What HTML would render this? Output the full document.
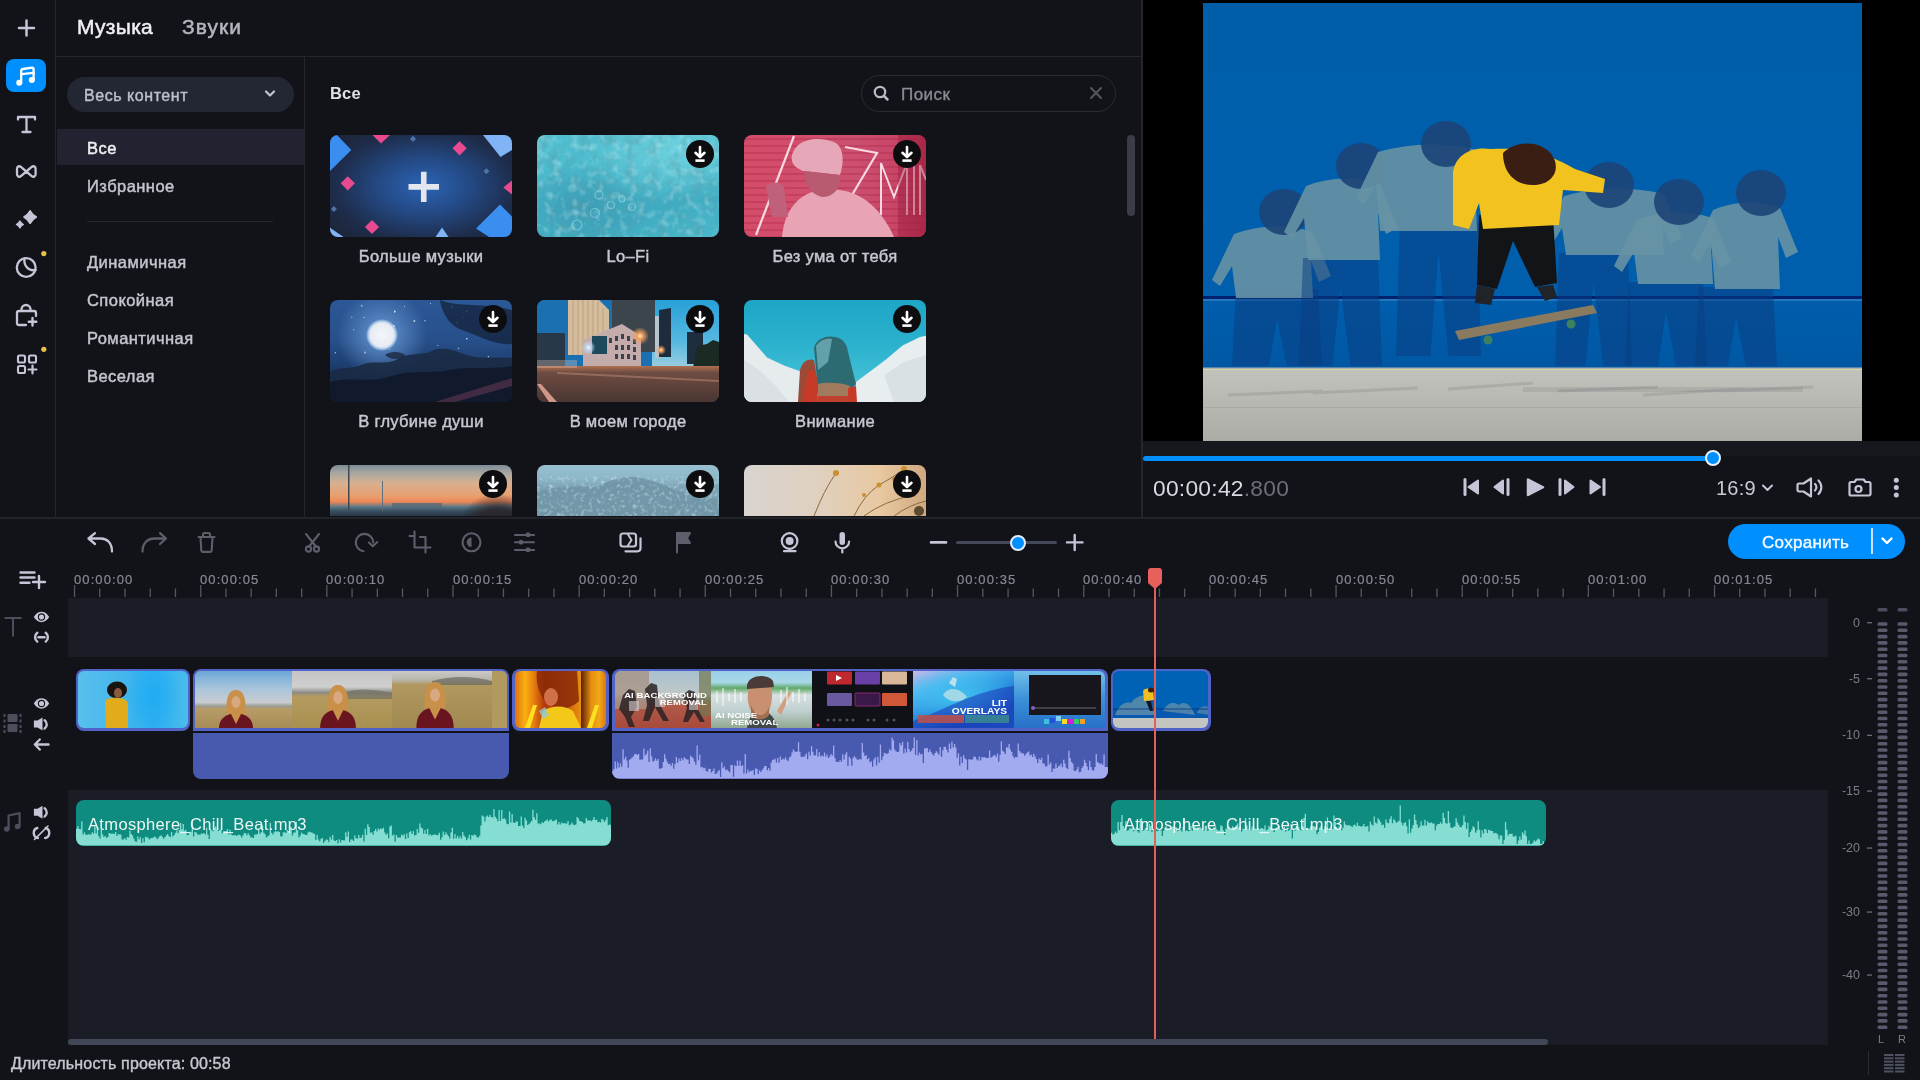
<!DOCTYPE html>
<html><head><meta charset="utf-8">
<style>
*{margin:0;padding:0;box-sizing:border-box}
html,body{width:1920px;height:1080px;overflow:hidden;background:#121318;font-family:"Liberation Sans",sans-serif;color:#d6d7e0;-webkit-font-smoothing:antialiased}
.t,.lbl{will-change:transform}
.a{position:absolute}
.ic{position:absolute;overflow:visible}
.t{position:absolute;white-space:nowrap;line-height:1}
.card{position:absolute;width:182px;height:102px;border-radius:8px;overflow:hidden}
.lbl{position:absolute;width:182px;text-align:center;font-size:16.5px;color:#c6c7d1;letter-spacing:0.3px;-webkit-text-stroke:0.45px #c6c7d1;line-height:1}
.dl{position:absolute;width:28px;height:28px;border-radius:14px;background:#0d0d10}
</style></head><body>

<div class="a" style="left:55px;top:0;width:1px;height:518px;background:#25262b"></div>
<svg class="ic" style="left:0;top:0" width="56" height="400" viewBox="0 0 56 400">
 <g stroke="#c4c5d6" fill="none" stroke-linecap="round" stroke-linejoin="round">
  <path d="M26.5 20.5v15M19 28h15" stroke-width="2.5"/>
  <path d="M18 119.5v-2.5h17v2.5M26.5 117v15M22.5 132h8" stroke-width="2.3"/>
  <path d="M26.3 171.5L21.2 167.2C19.2 165.5 17 166.2 17 168.7v5.6c0 2.5 2.2 3.2 4.2 1.5ZL31.4 167.2C33.4 165.5 35.6 166.2 35.6 168.7v5.6c0 2.5 -2.2 3.2 -4.2 1.5Z" stroke-width="2.3"/>
  <circle cx="26.2" cy="267.5" r="9.4" stroke-width="2.3"/>
  <path d="M24.5 258.5C23.5 265 28 271.5 35.6 270" stroke-width="2.3"/>
  <path d="M36 316v-3a2 2 0 0 0 -2 -2h-15a2 2 0 0 0 -2 2v10a2 2 0 0 0 2 2h7" stroke-width="2.3"/>
  <path d="M21.5 311v-1.5a4.5 4.5 0 0 1 9 0v1.5" stroke-width="2.3"/>
  <path d="M32.5 318v7.5M28.8 321.8h7.5" stroke-width="2.4"/>
  <rect x="18" y="355.5" width="7" height="7" rx="1.5" stroke-width="2.1"/>
  <rect x="29" y="355.5" width="7" height="7" rx="1.5" stroke-width="2.1"/>
  <rect x="18" y="366" width="7" height="7" rx="1.5" stroke-width="2.1"/>
  <path d="M32.5 365.5v8M28.5 369.5h8" stroke-width="2.2"/>
 </g>
 <g fill="#c4c5d6" stroke="#c4c5d6" stroke-linejoin="round">
  <path d="M30.1 210.8Q32.3 214.7 36.3 217Q32.3 219.3 30.1 223.3Q27.9 219.3 24 217Q27.9 214.7 30.1 210.8Z" stroke-width="1.6"/>
  <path d="M19.9 221Q21 223.3 23.4 224.5Q21 225.7 19.9 228Q18.8 225.7 16.4 224.5Q18.8 223.3 19.9 221Z" stroke-width="1.3"/>
 </g>
 <circle cx="43.8" cy="253.6" r="2.6" fill="#e6c24a"/>
 <circle cx="43.8" cy="349.3" r="2.6" fill="#e6c24a"/>
</svg>
<div class="a" style="left:6px;top:59px;width:40px;height:33px;border-radius:8px;background:#008fff"></div>
<svg class="ic" style="left:0;top:0" width="56" height="100" viewBox="0 0 56 100">
 <g fill="none" stroke="#fff" stroke-width="2.3" stroke-linecap="round" stroke-linejoin="round">
  <path d="M21.2 83V71a2 2 0 0 1 1.8 -2l9 -1.3a1.6 1.6 0 0 1 1.6 1.6V80"/>
  <path d="M21.5 74.2l12 -1.4"/>
 </g>
 <circle cx="19.2" cy="82.7" r="3" fill="#fff"/>
 <circle cx="31.8" cy="80" r="3" fill="#fff"/>
</svg>
<div class="a" style="left:56px;top:56px;width:1085px;height:1px;background:#25262b"></div>
<div class="t" style="left:77px;top:16px;font-size:21px;color:#f0f0f4;letter-spacing:0.3px;-webkit-text-stroke:0.5px #f0f0f4">Музыка</div>
<div class="t" style="left:182px;top:16px;font-size:21px;color:#b5b6c2;letter-spacing:1.05px;-webkit-text-stroke:0.5px #b5b6c2">Звуки</div>
<div class="a" style="left:304px;top:57px;width:1px;height:461px;background:#25262b"></div>
<div class="a" style="left:67px;top:77px;width:227px;height:35px;border-radius:18px;background:#232633"></div>
<div class="t" style="left:84px;top:88px;font-size:16px;color:#c0c1cb;letter-spacing:0.55px;-webkit-text-stroke:0.4px #c0c1cb">Весь контент</div>
<svg class="ic" style="left:0;top:0" width="300" height="120"><path d="M266 91.5l4 4 4-4" fill="none" stroke="#c4c5d6" stroke-width="2.2" stroke-linecap="round" stroke-linejoin="round"/></svg>
<div class="a" style="left:57px;top:128.5px;width:247px;height:36.5px;background:#212430"></div>
<div class="t" style="left:87px;top:140px;font-size:16.5px;color:#f2f2f6;letter-spacing:0.45px;-webkit-text-stroke:0.45px #f2f2f6">Все</div>
<div class="t" style="left:87px;top:178px;font-size:16.5px;color:#c4c5cf;letter-spacing:0.45px;-webkit-text-stroke:0.45px #c4c5cf">Избранное</div>
<div class="t" style="left:87px;top:254px;font-size:16.5px;color:#c4c5cf;letter-spacing:0.45px;-webkit-text-stroke:0.45px #c4c5cf">Динамичная</div>
<div class="t" style="left:87px;top:292px;font-size:16.5px;color:#c4c5cf;letter-spacing:0.45px;-webkit-text-stroke:0.45px #c4c5cf">Спокойная</div>
<div class="t" style="left:87px;top:330px;font-size:16.5px;color:#c4c5cf;letter-spacing:0.45px;-webkit-text-stroke:0.45px #c4c5cf">Романтичная</div>
<div class="t" style="left:87px;top:368px;font-size:16.5px;color:#c4c5cf;letter-spacing:0.45px;-webkit-text-stroke:0.45px #c4c5cf">Веселая</div>
<div class="a" style="left:87px;top:221px;width:186px;height:1px;background:#272931"></div>
<div class="t" style="left:330px;top:85px;font-size:16.5px;color:#dfe0e7;font-weight:bold;letter-spacing:0.2px">Все</div>
<div class="a" style="left:861px;top:75px;width:255px;height:37px;border-radius:19px;border:1.5px solid #2b2d35"></div>
<div class="t" style="left:901px;top:86px;font-size:17px;color:#8a8b95;letter-spacing:0.45px;-webkit-text-stroke:0.35px #8a8b95">Поиск</div>
<svg class="ic" style="left:0;top:0" width="1140" height="120">
 <circle cx="880" cy="92" r="5.2" fill="none" stroke="#b9bac6" stroke-width="2.3"/>
 <path d="M884 96l3.5 3.5" stroke="#b9bac6" stroke-width="2.5" stroke-linecap="round"/>
 <path d="M1091 88l10 10M1101 88l-10 10" stroke="#55575f" stroke-width="2" stroke-linecap="round"/>
</svg>
<div class="a" style="left:1127px;top:135px;width:8px;height:81px;border-radius:4px;background:#3a3d47"></div>
<div class="a" style="left:1141px;top:0;width:2px;height:518px;background:#25262b"></div>
<div class="a" style="left:305px;top:57px;width:836px;height:459px;overflow:hidden">
<div class="card" style="left:25px;top:78px;background:radial-gradient(ellipse 70% 75% at 52% 50%, #2b64b4 0%, #244a86 35%, #1e2d4c 70%, #1c2232 100%)">
<svg class="ic" style="left:0;top:0" width="182" height="102" viewBox="0 0 182 102">
 <path d="M0 0L7 0L21.3 15L0 36Z" fill="#3a8ef0"/>
 <path d="M42.5 0L60 0L51 8.5Z" fill="#e84a8f"/>
 <path d="M83 0.8L86 3.9L83 7L80 3.9Z" fill="#4f74a8"/>
 <path d="M129.6 6.2L136.7 13.3L129.6 20.4L122.5 13.3Z" fill="#e84a8f"/>
 <path d="M153 0L182 0L182 15L170.5 22Z" fill="#80b4f6"/>
 <path d="M156.4 33.2L159.4 36.2L156.4 39.2L153.4 36.2Z" fill="#4f74a8"/>
 <path d="M17.8 41.2L24.9 48.3L17.8 55.4L10.7 48.3Z" fill="#e84a8f"/>
 <path d="M182 45.5L182 59.5L173.3 52.5Z" fill="#e84a8f"/>
 <path d="M3.9 71L6.9 74L3.9 77L0.9 74Z" fill="#4f74a8"/>
 <path d="M42 84.9L49.1 92L42 99.1L34.9 92Z" fill="#e84a8f"/>
 <path d="M0 92.8L13.6 102L0 102Z" fill="#80b4f6"/>
 <path d="M112 92.5L118.5 102L105.5 102Z" fill="#80b4f6"/>
 <path d="M170 69.5L182 81.5L182 102L159 102L146 93.5Z" fill="#3a8ef0"/>
 <path d="M93.75 36.7v30.4M78.5 51.9h30.5" stroke="#e4e6ee" stroke-width="5.6"/>
</svg>
</div>
<div class="card" style="left:232px;top:78px;background:radial-gradient(ellipse 60% 50% at 80% 15%, #6fd3e0 0%, rgba(111,211,224,0) 100%), radial-gradient(ellipse 40% 40% at 25% 70%, #3c9db5 0%, rgba(60,157,181,0) 100%), linear-gradient(160deg,#52c2d2 0%,#46b4c8 45%,#40acc2 70%,#4ab8ca 100%)">
<svg class="ic" style="left:0;top:0" width="182" height="102" viewBox="0 0 182 102">
 <defs><filter id="lofiN" x="0" y="0" width="100%" height="100%"><feTurbulence type="fractalNoise" baseFrequency="0.09" numOctaves="3" seed="4"/><feColorMatrix type="matrix" values="0 0 0 0 0.1  0 0 0 0 0.35  0 0 0 0 0.42  0 0 0 -2.2 1.25"/></filter>
 <filter id="lofiL" x="0" y="0" width="100%" height="100%"><feTurbulence type="fractalNoise" baseFrequency="0.12" numOctaves="2" seed="9"/><feColorMatrix type="matrix" values="0 0 0 0 0.75  0 0 0 0 0.95  0 0 0 0 0.97  0 0 0 -2.5 1.3"/></filter></defs>
 <rect width="182" height="102" filter="url(#lofiN)" opacity="0.55"/>
 <rect width="182" height="102" filter="url(#lofiL)" opacity="0.35"/>
 <g fill="none" stroke="#a8e4ec" stroke-width="1.2" opacity="0.5"><circle cx="62" cy="60" r="4"/><circle cx="74" cy="70" r="3.5"/><circle cx="58" cy="78" r="4.5"/><circle cx="85" cy="64" r="3"/><circle cx="95" cy="72" r="3.5"/><circle cx="40" cy="90" r="5"/></g>
</svg>
</div>
<div class="dl" style="left:381px;top:83px"></div><svg class="ic" style="left:381px;top:83px" width="28" height="28"><g fill="none" stroke="#fff" stroke-width="2.6" stroke-linecap="round" stroke-linejoin="round"><path d="M14 7v9.5M9.5 12.8L14 17l4.5-4.2"/><path d="M9.4 20.6h9.2" stroke-linecap="butt"/></g></svg>
<div class="card" style="left:439px;top:78px;background:linear-gradient(90deg,#d44c6a 0%,#d24e6c 30%,#cc5070 60%,#c84466 85%,#b8304c 100%)">
<svg class="ic" style="left:0;top:0" width="182" height="102" viewBox="0 0 182 102">
 <rect x="0" y="3" width="182" height="2" fill="#a82848" opacity="0.35"/><rect x="0" y="10" width="182" height="2" fill="#a82848" opacity="0.35"/><rect x="0" y="17" width="182" height="2" fill="#a82848" opacity="0.35"/><rect x="0" y="24" width="182" height="2" fill="#a82848" opacity="0.35"/><rect x="0" y="31" width="182" height="2" fill="#a82848" opacity="0.35"/><rect x="0" y="38" width="182" height="2" fill="#a82848" opacity="0.35"/><rect x="0" y="45" width="182" height="2" fill="#a82848" opacity="0.35"/><rect x="0" y="52" width="182" height="2" fill="#a82848" opacity="0.35"/><rect x="0" y="59" width="182" height="2" fill="#a82848" opacity="0.35"/><rect x="0" y="66" width="182" height="2" fill="#a82848" opacity="0.35"/><rect x="0" y="73" width="182" height="2" fill="#a82848" opacity="0.35"/><rect x="0" y="80" width="182" height="2" fill="#a82848" opacity="0.35"/><rect x="0" y="87" width="182" height="2" fill="#a82848" opacity="0.35"/><rect x="0" y="94" width="182" height="2" fill="#a82848" opacity="0.35"/><rect x="0" y="101" width="182" height="2" fill="#a82848" opacity="0.35"/>
 <path d="M12 100L50 1" stroke="#f6d8e0" stroke-width="2.2" fill="none"/>
 <path d="M101 12L133 18L108 60" stroke="#f6d8e0" stroke-width="2.2" fill="none"/>
 <path d="M137 80V28L150 62L163 28V80M170 28V80M176 80V30L182 45" stroke="#f6d8e0" stroke-width="2" fill="none"/>
 <path d="M38 102C40 78 52 60 75 55C100 52 130 58 150 102Z" fill="#e8a4b4"/>
 <path d="M48 20C52 4 75 0 92 8C100 14 100 28 96 40L60 36C52 34 46 28 48 20Z" fill="#e6a8b8"/>
 <path d="M60 36L96 40C98 52 90 62 78 62C68 60 60 50 60 36Z" fill="#b85a70"/>
 <path d="M22 52C26 46 36 46 40 52L44 82L28 82Z" fill="#c0607a"/>
 <rect x="154" y="0" width="28" height="102" fill="#9a2040" opacity="0.45"/>
</svg>
</div>
<div class="dl" style="left:588px;top:83px"></div><svg class="ic" style="left:588px;top:83px" width="28" height="28"><g fill="none" stroke="#fff" stroke-width="2.6" stroke-linecap="round" stroke-linejoin="round"><path d="M14 7v9.5M9.5 12.8L14 17l4.5-4.2"/><path d="M9.4 20.6h9.2" stroke-linecap="butt"/></g></svg>
<div class="card" style="left:25px;top:243px;background:radial-gradient(circle 16px at 52px 35px, #f4f6fa 0%, #e6ebf2 75%, rgba(170,200,235,0.9) 88%, rgba(80,130,200,0) 100%), radial-gradient(circle 45px at 52px 35px, rgba(110,160,220,0.9) 0%, rgba(79,127,192,0) 100%), linear-gradient(180deg,#2c5896 0%,#274f8a 40%,#1d3d6e 65%,#142848 85%,#1a2440 100%)">
<svg class="ic" style="left:0;top:0" width="182" height="102" viewBox="0 0 182 102">
 <circle cx="107.8" cy="45.3" r="0.5" fill="#e8f0ff" opacity="0.92"/><circle cx="133.0" cy="17.2" r="0.5" fill="#e8f0ff" opacity="0.95"/><circle cx="23.7" cy="29.7" r="0.6" fill="#e8f0ff" opacity="0.69"/><circle cx="21.8" cy="17.2" r="0.6" fill="#e8f0ff" opacity="0.70"/><circle cx="35.0" cy="52.4" r="1.0" fill="#e8f0ff" opacity="0.58"/><circle cx="136.5" cy="10.9" r="1.0" fill="#e8f0ff" opacity="0.56"/><circle cx="5.3" cy="52.7" r="0.6" fill="#e8f0ff" opacity="0.89"/><circle cx="163.4" cy="12.5" r="0.6" fill="#e8f0ff" opacity="0.64"/><circle cx="163.6" cy="33.7" r="0.6" fill="#e8f0ff" opacity="0.59"/><circle cx="164.8" cy="14.2" r="1.0" fill="#e8f0ff" opacity="0.65"/><circle cx="64.6" cy="12.5" r="0.6" fill="#e8f0ff" opacity="0.63"/><circle cx="59.8" cy="49.6" r="0.5" fill="#e8f0ff" opacity="0.80"/><circle cx="121.8" cy="6.8" r="0.8" fill="#e8f0ff" opacity="0.91"/><circle cx="84.3" cy="21.0" r="1.0" fill="#e8f0ff" opacity="0.74"/><circle cx="34.1" cy="17.6" r="0.5" fill="#e8f0ff" opacity="0.97"/><circle cx="64.0" cy="26.0" r="1.0" fill="#e8f0ff" opacity="0.68"/><circle cx="100.5" cy="3.5" r="0.5" fill="#e8f0ff" opacity="0.85"/><circle cx="107.9" cy="57.4" r="0.5" fill="#e8f0ff" opacity="0.88"/><circle cx="158.4" cy="56.7" r="0.8" fill="#e8f0ff" opacity="0.76"/><circle cx="152.3" cy="17.3" r="1.0" fill="#e8f0ff" opacity="0.55"/><circle cx="128.5" cy="48.4" r="0.8" fill="#e8f0ff" opacity="0.52"/><circle cx="161.1" cy="8.2" r="0.8" fill="#e8f0ff" opacity="0.76"/><circle cx="64.8" cy="11.4" r="0.8" fill="#e8f0ff" opacity="0.96"/><circle cx="94.9" cy="20.8" r="0.8" fill="#e8f0ff" opacity="0.65"/><circle cx="136.8" cy="38.7" r="0.8" fill="#e8f0ff" opacity="1.00"/><circle cx="31.7" cy="5.8" r="1.0" fill="#e8f0ff" opacity="0.52"/><circle cx="127.2" cy="22.6" r="0.8" fill="#e8f0ff" opacity="0.73"/><circle cx="74.6" cy="6.2" r="0.5" fill="#e8f0ff" opacity="0.90"/>
 <path d="M0 72C10 66 22 70 34 64C46 60 56 66 70 58C82 52 94 56 104 50C116 46 128 52 140 56C156 60 170 56 182 58L182 102L0 102Z" fill="#1a2a44" opacity="0.9"/>
 <path d="M0 82C20 76 40 84 62 76C80 70 100 74 120 70C140 66 160 70 182 66L182 102L0 102Z" fill="#101a2c"/>
 <path d="M105 102L182 78L182 86L125 102Z" fill="#6a3a58" opacity="0.55"/>
 <path d="M110 0C130 8 150 2 182 10L182 44C166 46 150 36 132 30C120 26 112 14 110 0Z" fill="#14223a" opacity="0.75"/>
 <path d="M55 55C62 50 72 52 76 56C70 60 60 60 55 55Z" fill="#1a2840" opacity="0.8"/>
</svg>
</div>
<div class="dl" style="left:174px;top:248px"></div><svg class="ic" style="left:174px;top:248px" width="28" height="28"><g fill="none" stroke="#fff" stroke-width="2.6" stroke-linecap="round" stroke-linejoin="round"><path d="M14 7v9.5M9.5 12.8L14 17l4.5-4.2"/><path d="M9.4 20.6h9.2" stroke-linecap="butt"/></g></svg>
<div class="card" style="left:232px;top:243px;background:linear-gradient(180deg,rgba(0,0,0,0) 0%,rgba(0,0,0,0) 56%,#5a4a48 58%,#6a5450 70%,#4e4548 100%), linear-gradient(90deg,#2a78b0 0%,#3a88b8 12%,#c8c0b8 20%,#d8c8b0 32%,#6a6e78 45%,#807880 60%,#2a3440 70%,#3c98c8 80%,#2a5070 92%,#2a4030 100%)">
<svg class="ic" style="left:0;top:0" width="182" height="102" viewBox="0 0 182 102">
 <defs><linearGradient id="skyR" x1="0" y1="0" x2="0" y2="1"><stop offset="0" stop-color="#28a0d8"/><stop offset="0.6" stop-color="#58b8e0"/><stop offset="1" stop-color="#a0d0e0"/></linearGradient>
 <linearGradient id="road" x1="0" y1="0" x2="0" y2="1"><stop offset="0" stop-color="#b07050"/><stop offset="0.18" stop-color="#6e4c42"/><stop offset="1" stop-color="#4a3632"/></linearGradient>
 <radialGradient id="glow1"><stop offset="0" stop-color="#fff0c0"/><stop offset="0.3" stop-color="#f0a060"/><stop offset="1" stop-color="#f0a060" stop-opacity="0"/></radialGradient>
 <radialGradient id="glow2"><stop offset="0" stop-color="#ffffff"/><stop offset="0.3" stop-color="#c0d8f0"/><stop offset="1" stop-color="#c0d8f0" stop-opacity="0"/></radialGradient></defs>
 <rect x="0" y="0" width="182" height="70" fill="#1a70b0"/>
 <rect x="115" y="0" width="67" height="70" fill="url(#skyR)"/>
 <rect x="0" y="33" width="28" height="36" fill="#283848"/>
 <path d="M31 0H62L72 10V55H31Z" fill="#d4bc9c"/>
 <path d="M36 0v55M41 0v55M46 0v55M51 0v55M56 0v55M61 0v55M66 8v47" stroke="#b8a080" stroke-width="1"/>
 <rect x="75" y="0" width="43" height="52" fill="#3c444c"/>
 <rect x="118" y="16" width="6" height="42" fill="#b8c4cc"/>
 <path d="M122 10L134 8V57H122Z" fill="#1c2c3c"/>
 <rect x="150" y="32" width="16" height="32" fill="#1e2e3e"/>
 <path d="M156 68L160 46L170 44L176 40L182 42V68Z" fill="#1c2a24"/>
 <path d="M46 40L85 24L104 36V68H46Z" fill="#c4acac"/>
 <path d="M72 38h3v5h-3zM78 36h3v5h-3zM84 34h3v5h-3zM90 36h3v5h-3zM96 39h3v5h-3zM78 45h3v5h-3zM84 45h3v5h-3zM90 45h3v5h-3zM96 47h3v5h-3zM78 54h3v5h-3zM84 54h3v5h-3zM90 54h3v5h-3zM96 55h3v5h-3z" fill="#3a4450"/>
 <rect x="55" y="36" width="15" height="18" fill="#1c4a5a"/>
 <circle cx="103" cy="36" r="9" fill="url(#glow1)"/>
 <circle cx="51.5" cy="47.5" r="7" fill="url(#glow2)"/>
 <circle cx="124" cy="50" r="5" fill="url(#glow1)"/>
 <rect x="0" y="66" width="182" height="36" fill="url(#road)"/>
 <path d="M20 72L182 80V82L20 74Z" fill="#b08070" opacity="0.6"/>
 <path d="M0 84L4 84L20 102L12 102Z" fill="#d09888"/>
 <rect x="0" y="60" width="40" height="8" fill="#f0d0c0" opacity="0.3"/>
</svg>
</div>
<div class="dl" style="left:381px;top:248px"></div><svg class="ic" style="left:381px;top:248px" width="28" height="28"><g fill="none" stroke="#fff" stroke-width="2.6" stroke-linecap="round" stroke-linejoin="round"><path d="M14 7v9.5M9.5 12.8L14 17l4.5-4.2"/><path d="M9.4 20.6h9.2" stroke-linecap="butt"/></g></svg>
<div class="card" style="left:439px;top:243px;background:linear-gradient(180deg,#1ea6c6 0%,#2ab0cc 40%,#3cbcd4 70%,#50c4d8 100%)">
<svg class="ic" style="left:0;top:0" width="182" height="102" viewBox="0 0 182 102">
 <path d="M0 34L3 34.5L10 42.6L23 57.5L40 65.4L56 71.3L56 102L0 102Z" fill="#e6ecee"/>
 <path d="M0 60L15 70L30 84L45 102L0 102Z" fill="#d4dcde" opacity="0.7"/>
 <path d="M112 82L142 59.4L158.6 45.6L176 37L182 35.7L182 102L112 102Z" fill="#e8eef0"/>
 <path d="M140 75L160 62L182 55L182 102L150 102Z" fill="#d0d8dc" opacity="0.6"/>
 <path d="M70 48C72 40 80 36 88 36.7C97 37 103 42 104 52L112 84L104 92L74 90Z" fill="#2e6a72"/>
 <path d="M72 46C76 40 82 38 88 39L84 62L74 70Z" fill="#7ab8c0" opacity="0.7"/>
 <path d="M56 70C58 62 64 58 70 60L75 90L70 102L54 102Z" fill="#9a4a36"/>
 <path d="M64 70L72 72L74 102L58 102Z" fill="#c83a28"/>
 <path d="M74 84C82 82 96 82 106 86L107 102L74 102Z" fill="#a07a5c"/>
 <path d="M104 88L112 86L113 102L104 102Z" fill="#c83a28"/>
 <path d="M74 96L106 96L106 102L74 102Z" fill="#c04030"/>
</svg>
</div>
<div class="dl" style="left:588px;top:248px"></div><svg class="ic" style="left:588px;top:248px" width="28" height="28"><g fill="none" stroke="#fff" stroke-width="2.6" stroke-linecap="round" stroke-linejoin="round"><path d="M14 7v9.5M9.5 12.8L14 17l4.5-4.2"/><path d="M9.4 20.6h9.2" stroke-linecap="butt"/></g></svg>
<div class="card" style="left:25px;top:408px;background:radial-gradient(ellipse 22% 34% at 92% 62%, rgba(40,36,40,0.95) 0%, rgba(40,36,40,0.85) 55%, rgba(40,36,40,0) 100%), linear-gradient(180deg,#7e8c98 0%,#a8a8a0 8%,#d8b090 18%,#e8a070 30%,#f08858 36%,#5a7888 41%,#3a5060 45%,#283848 50%)">
<svg class="ic" style="left:0;top:0" width="182" height="102"><rect x="18" y="0" width="1.5" height="46" fill="#404850"/><rect x="52" y="16" width="1" height="30" fill="#607080"/><rect x="62" y="38" width="50" height="6" fill="#506878" opacity="0.7"/></svg>
</div>
<div class="dl" style="left:174px;top:413px"></div><svg class="ic" style="left:174px;top:413px" width="28" height="28"><g fill="none" stroke="#fff" stroke-width="2.6" stroke-linecap="round" stroke-linejoin="round"><path d="M14 7v9.5M9.5 12.8L14 17l4.5-4.2"/><path d="M9.4 20.6h9.2" stroke-linecap="butt"/></g></svg>
<div class="card" style="left:232px;top:408px;background:linear-gradient(180deg,#98c0d0 0%,#8cb6c8 14%,#7aa2b4 22%,#82a8b8 35%,#7ca2b2 50%)">
<svg class="ic" style="left:0;top:0" width="182" height="102"><defs><filter id="snowN" x="0" y="0" width="100%" height="100%"><feTurbulence type="fractalNoise" baseFrequency="0.25" numOctaves="2" seed="3"/><feColorMatrix type="matrix" values="0 0 0 0 0.85  0 0 0 0 0.93  0 0 0 0 0.97  0 0 0 -2.4 1.2"/></filter></defs><path d="M0 26Q30 20 60 22Q80 10 100 12Q120 16 140 26Q160 30 182 34V102H0Z" fill="#6e94a6" opacity="0.85"/><path d="M0 26Q30 20 60 22Q80 10 100 12Q120 16 140 26Q160 30 182 34V102H0Z" filter="url(#snowN)" opacity="0.5"/></svg>
</div>
<div class="dl" style="left:381px;top:413px"></div><svg class="ic" style="left:381px;top:413px" width="28" height="28"><g fill="none" stroke="#fff" stroke-width="2.6" stroke-linecap="round" stroke-linejoin="round"><path d="M14 7v9.5M9.5 12.8L14 17l4.5-4.2"/><path d="M9.4 20.6h9.2" stroke-linecap="butt"/></g></svg>
<div class="card" style="left:439px;top:408px;background:linear-gradient(90deg,#d8d4d0 0%,#e0d0c0 40%,#e8c8a0 75%,#d0a880 100%)">
<svg class="ic" style="left:0;top:0" width="182" height="102" fill="none" stroke="#8a6a40" stroke-width="1"><path d="M70 51Q80 25 92 8M110 51Q120 30 135 20Q150 12 160 4M120 51Q140 36 170 30M150 51Q165 40 182 36"/><g fill="#c89030" stroke="none"><circle cx="92" cy="8" r="3"/><circle cx="135" cy="20" r="2.5"/><circle cx="160" cy="4" r="3"/><circle cx="150" cy="14" r="2"/><circle cx="120" cy="30" r="2"/><circle cx="170" cy="30" r="2"/><circle cx="175" cy="46" r="5" fill="#5a4a30"/></g></svg>
</div>
<div class="dl" style="left:588px;top:413px"></div><svg class="ic" style="left:588px;top:413px" width="28" height="28"><g fill="none" stroke="#fff" stroke-width="2.6" stroke-linecap="round" stroke-linejoin="round"><path d="M14 7v9.5M9.5 12.8L14 17l4.5-4.2"/><path d="M9.4 20.6h9.2" stroke-linecap="butt"/></g></svg>
</div>
<div class="lbl" style="left:330px;top:247.5px">Больше музыки</div>
<div class="lbl" style="left:537px;top:247.5px">Lo–Fi</div>
<div class="lbl" style="left:744px;top:247.5px">Без ума от тебя</div>
<div class="lbl" style="left:330px;top:412.5px">В глубине души</div>
<div class="lbl" style="left:537px;top:412.5px">В моем городе</div>
<div class="lbl" style="left:744px;top:412.5px">Внимание</div>
<div class="a" style="left:1143px;top:0;width:777px;height:441px;background:#000"></div>
<div class="a" style="left:1203px;top:3px;width:659px;height:438px;overflow:hidden;background:linear-gradient(180deg,#005ea8 0%,#0060ae 50%,#005eac 67%,#0058a4 83%,#bfbfba 83.5%,#b8b8b3 92%,#b0b0ab 100%)">
<svg class="ic" style="left:0;top:0" width="659" height="438" viewBox="0 0 659 438"><defs><linearGradient id="gnd" x1="0" y1="0" x2="0" y2="1"><stop offset="0" stop-color="#c2c2bd"/><stop offset="1" stop-color="#acaca7"/></linearGradient></defs>
<rect x="0" y="293" width="659" height="3" fill="#002070"/>
<rect x="0" y="296" width="659" height="2" fill="#3a88c8" opacity="0.6"/>

<path d="M33 286 L115 286 L119 363 L84.0 363 L74.0 316 L66.0 363 L29 363 Z" fill="#0a3c80" opacity="0.5"/>
<path d="M31 231 Q69.5 217 110 229 L128 273 L116 279 L108 258 L110 295 L33 295 L29 263 L17 283 L9 277 Z" fill="#6692a4" opacity="0.9"/>
<ellipse cx="81" cy="209" rx="25" ry="23" fill="#1c4478" opacity="0.9"/>
<ellipse cx="81" cy="382" rx="55" ry="5" fill="#8a8e90" opacity="0.45"/>
<path d="M100 255 L175 255 L179 363 L147.5 363 L137.5 285 L129.5 363 L96 363 Z" fill="#0a3c80" opacity="0.5"/>
<path d="M103 183 Q139.0 169 177 181 L195 225 L183 231 L175 210 L177 257 L105 257 L101 215 L89 235 L81 229 Z" fill="#6692a4" opacity="0.9"/>
<ellipse cx="158" cy="163" rx="25" ry="23" fill="#1c4478" opacity="0.9"/>
<ellipse cx="158" cy="382" rx="55" ry="5" fill="#8a8e90" opacity="0.45"/>
<path d="M197 218 L274 218 L278 353 L245.5 353 L235.5 248 L227.5 353 L193 353 Z" fill="#0a3c80" opacity="0.5"/>
<path d="M175 149 Q223.5 135 274 147 L292 191 L280 197 L272 176 L274 228 L177 228 L173 181 L161 201 L153 195 Z" fill="#6692a4" opacity="0.9"/>
<ellipse cx="243" cy="141" rx="25" ry="23" fill="#1c4478" opacity="0.9"/>
<ellipse cx="243" cy="382" rx="55" ry="5" fill="#8a8e90" opacity="0.45"/>
<path d="M356 250 L425 250 L429 363 L400.5 363 L390.5 280 L382.5 363 L352 363 Z" fill="#0a3c80" opacity="0.5"/>
<path d="M361 193 Q410.0 179 461 191 L479 235 L467 241 L459 220 L461 252 L363 252 L359 225 L347 245 L339 239 Z" fill="#6692a4" opacity="0.9"/>
<ellipse cx="406" cy="182" rx="25" ry="23" fill="#1c4478" opacity="0.9"/>
<ellipse cx="406" cy="382" rx="55" ry="5" fill="#8a8e90" opacity="0.45"/>
<path d="M426 279 L500 279 L504 363 L473.0 363 L463.0 309 L455.0 363 L422 363 Z" fill="#0a3c80" opacity="0.5"/>
<path d="M433 217 Q470.5 203 510 215 L528 259 L516 265 L508 244 L510 281 L435 281 L431 249 L419 269 L411 263 Z" fill="#6692a4" opacity="0.9"/>
<ellipse cx="476" cy="199" rx="25" ry="23" fill="#1c4478" opacity="0.9"/>
<ellipse cx="476" cy="382" rx="55" ry="5" fill="#8a8e90" opacity="0.45"/>
<path d="M496 284 L570 284 L574 363 L543.0 363 L533.0 314 L525.0 363 L492 363 Z" fill="#0a3c80" opacity="0.5"/>
<path d="M510 207 Q542.5 193 577 205 L595 249 L583 255 L575 234 L577 286 L512 286 L508 239 L496 259 L488 253 Z" fill="#6692a4" opacity="0.9"/>
<ellipse cx="558" cy="190" rx="25" ry="23" fill="#1c4478" opacity="0.9"/>
<ellipse cx="558" cy="382" rx="55" ry="5" fill="#8a8e90" opacity="0.45"/>
<path d="M276 212 L274 282 L294 286 L310 238 L332 284 L354 280 L350 212 Z" fill="#121418"/>
<path d="M250 170 C252 152 268 143 288 146 C318 144 345 150 372 166 L402 176 L400 190 L360 187 L356 222 L280 226 L276 200 L266 226 L250 222 Z" fill="#f2c21e"/>
<path d="M300 150 C315 135 345 138 352 158 C356 172 345 182 330 182 C312 182 300 170 300 150 Z" fill="#3a1e14"/>
<path d="M252 328 L390 302 L394 310 L256 337 Z" fill="#8a7a60"/>
<circle cx="285" cy="337" r="4.5" fill="#3c8060"/><circle cx="368" cy="321" r="4.5" fill="#3c8060"/>
<path d="M274 282 l-2 18 l16 2 l4 -16z M334 284 l8 14 l12 -4 l-4 -12z" fill="#202428"/>
<rect x="0" y="366" width="659" height="2" fill="#d8d4a0"/>
<rect x="0" y="367" width="659" height="71" fill="url(#gnd)"/><rect x="0" y="404" width="659" height="1" fill="#909088" opacity="0.3"/>
<g fill="none" stroke="#8a8a86" stroke-width="3" opacity="0.35"><path d="M25 392L120 388M110 390L215 385M245 386L330 380M355 388L455 384M440 392L540 386M520 388L610 384"/></g>
<path d="M320 384 L600 384 L600 389 L320 389Z" fill="#6a6c6e" opacity="0.18"/>
</svg>
</div>
<div class="a" style="left:1143px;top:441px;width:777px;height:76px;background:#121318"></div>
<div class="a" style="left:1143px;top:441px;width:777px;height:15px;background:#16181d"></div>
<div class="a" style="left:1143px;top:455.5px;width:571px;height:5px;border-radius:2.5px;background:#008fff"></div>
<div class="a" style="left:1705px;top:450px;width:16px;height:16px;border-radius:8px;background:#008fff;border:2px solid #e8f0ff"></div>
<div class="t" style="left:1153px;top:476.5px;font-size:22.8px;color:#d8d9e2;letter-spacing:0.25px">00:00:42<span style="color:#6c6e79">.800</span></div>
<svg class="ic" style="left:0;top:0" width="1920" height="520">
 <g fill="#c4c5d6" stroke="#c4c5d6" stroke-linejoin="round">
  <path d="M1465 479.5v15" stroke-width="3" stroke-linecap="round" fill="none"/>
  <path d="M1478 480.5v13l-9.5-6.5z" stroke-width="2"/>
  <path d="M1508 479.5v15" stroke-width="3" stroke-linecap="round" fill="none"/>
  <path d="M1503 480.5v13l-8.5-6.5z" stroke-width="2"/>
  <path d="M1528 479.5v15.5l15-7.75z" stroke-width="2.5"/>
  <path d="M1560 479.5v15" stroke-width="3" stroke-linecap="round" fill="none"/>
  <path d="M1565 480.5v13l8.5-6.5z" stroke-width="2"/>
  <path d="M1604 479.5v15" stroke-width="3" stroke-linecap="round" fill="none"/>
  <path d="M1590.5 480.5v13l9.5-6.5z" stroke-width="2"/>
 </g>
 <path d="M1763 485.5l4.5 4.5 4.5-4.5" fill="none" stroke="#c4c5d6" stroke-width="2" stroke-linecap="round" stroke-linejoin="round"/>
 <g fill="none" stroke="#c4c5d6" stroke-width="2.2" stroke-linejoin="round" stroke-linecap="round">
  <path d="M1799 483.5h4.5l7.5-5v18l-7.5-5h-4.5a1.5 1.5 0 0 1 -1.5 -1.5v-5a1.5 1.5 0 0 1 1.5 -1.5z"/>
  <path d="M1815 484a4.5 4.5 0 0 1 0 6.5M1818.5 480.5a9.5 9.5 0 0 1 0 13.5"/>
  <path d="M1851 482h3.5l1.8-2.5h7.4l1.8 2.5h3.5a1.5 1.5 0 0 1 1.5 1.5v10.5a1.5 1.5 0 0 1 -1.5 1.5h-18a1.5 1.5 0 0 1 -1.5 -1.5v-10.5a1.5 1.5 0 0 1 1.5 -1.5z"/>
  <circle cx="1858.5" cy="489" r="3"/>
 </g>
 <g fill="#c4c5d6"><circle cx="1896.3" cy="480.3" r="2.5"/><circle cx="1896.3" cy="487.6" r="2.5"/><circle cx="1896.3" cy="494.9" r="2.5"/></g>
</svg>
<div class="t" style="left:1716px;top:477.5px;font-size:20px;color:#c8c9d3;letter-spacing:0.2px">16:9</div>
<div class="a" style="left:0;top:517px;width:1920px;height:2px;background:#232429"></div>
<svg class="ic" style="left:0;top:0" width="1920" height="600">
 <g fill="none" stroke-linecap="round" stroke-linejoin="round">
  <path d="M95 533.2L88.5 538.5L95 544M89 538.5H101C107 538.5 112 543 112 551.5" stroke="#c4c5d6" stroke-width="2.3"/>
  <path d="M160 533.2L166 538.5L160 544M165.5 538.5H154C148 538.5 142.5 543 142.5 551.5" stroke="#5c5f6b" stroke-width="2.3"/>
  <g stroke="#5c5f6b" stroke-width="2.1">
   <path d="M198.5 537h16M203 537v-2.5a1.5 1.5 0 0 1 1.5 -1.5h4a1.5 1.5 0 0 1 1.5 1.5v2.5"/>
   <path d="M200.5 537.5l0.8 13a1.5 1.5 0 0 0 1.5 1.4h7.4a1.5 1.5 0 0 0 1.5 -1.4l0.8 -13"/>
   <path d="M306 534L315.5 546M319 534L309.5 546"/>
   <circle cx="308.5" cy="549" r="2.6"/><circle cx="316.5" cy="549" r="2.6"/>
   <path d="M363.5 551.2A8.7 8.7 0 1 1 373.2 542.5"/>
   <path d="M368.9 542.6L372.8 546.3L377.3 542"/>
   <path d="M409.5 536h5v-4.5M414.5 536v11.5h11.5M420 537h5.5v15.5M426 547.5h4.5"/>
   <circle cx="471.5" cy="542.3" r="9"/>
   <path d="M515 535h19M515 542.3h19M515 550h19"/>
  </g>
  <path d="M471.5 537.5a4.8 4.8 0 0 0 0 9.6z" fill="#5c5f6b" stroke="none"/>
  <g fill="#5c5f6b"><rect x="526" y="532.5" width="4" height="4.5" rx="1"/><rect x="519" y="540" width="4" height="4.5" rx="1"/><rect x="526" y="547.5" width="4" height="4.5" rx="1"/></g>
  <g stroke="#c4c5d6" stroke-width="2.2">
   <rect x="620.5" y="533.5" width="15.5" height="13" rx="2.5"/>
   <path d="M625.5 551.3h12a3 3 0 0 0 3 -3v-10"/>
   <path d="M628 534.5L631.5 540L628 545.5" stroke-width="2"/>
  </g>
  <path d="M677 552.5V533h13l-3 5 3 5h-13" fill="#5c5f6b" stroke="#5c5f6b" stroke-width="2"/>
  <g stroke="#c4c5d6" stroke-width="2.2">
   <circle cx="789.6" cy="541" r="7.8"/>
   <path d="M784 551.2h11.5M789.6 549v2"/>
  </g>
  <circle cx="789.6" cy="541" r="4" fill="#c4c5d6"/>
  <rect x="839.5" y="532" width="5.5" height="13" rx="2.75" fill="#c4c5d6"/>
  <path d="M835.5 541.5a6.8 6.8 0 0 0 13.6 0M842.3 548.5v4" stroke="#c4c5d6" stroke-width="2.2"/>
  <path d="M931 542.4h15" stroke="#c4c5d6" stroke-width="2.6"/>
  <path d="M1067 542.4h15.5M1074.7 535v15" stroke="#c4c5d6" stroke-width="2.4"/>
 </g>
</svg>
<div class="a" style="left:956px;top:541px;width:101px;height:3px;border-radius:2px;background:#454856"></div>
<div class="a" style="left:1010px;top:534.5px;width:16px;height:16px;border-radius:8px;background:#008fff;border:2px solid #e4ecff"></div>
<div class="a" style="left:1728px;top:523.5px;width:177px;height:35px;border-radius:18px;background:#008fff"></div>
<div class="t" style="left:1762px;top:534px;font-size:17px;color:#f4f8ff;letter-spacing:0.3px;-webkit-text-stroke:0.4px #f4f8ff">Сохранить</div>
<div class="a" style="left:1871px;top:528px;width:1.5px;height:26px;background:#c8e2ff"></div>
<svg class="ic" style="left:0;top:0" width="1920" height="600"><path d="M1882.5 538.5l4.5 4.5 4.5-4.5" fill="none" stroke="#fff" stroke-width="2.4" stroke-linecap="round" stroke-linejoin="round"/></svg>
<svg class="ic" style="left:0;top:0" width="60" height="600">
 <g stroke="#c4c5d6" stroke-width="2.4" stroke-linecap="round"><path d="M20.5 572.5h14M20.5 577.5h14M20.5 582.7h9M39 576v12M33 582h12"/></g>
</svg>
<svg class="ic" style="left:0;top:0" width="1920" height="600"><rect x="73.9" y="585" width="1.3" height="12" fill="#545763"/><rect x="99.1" y="588.5" width="1.3" height="8.5" fill="#545763"/><rect x="124.4" y="588.5" width="1.3" height="8.5" fill="#545763"/><rect x="149.6" y="588.5" width="1.3" height="8.5" fill="#545763"/><rect x="174.8" y="588.5" width="1.3" height="8.5" fill="#545763"/><rect x="200.1" y="585" width="1.3" height="12" fill="#545763"/><rect x="225.3" y="588.5" width="1.3" height="8.5" fill="#545763"/><rect x="250.5" y="588.5" width="1.3" height="8.5" fill="#545763"/><rect x="275.7" y="588.5" width="1.3" height="8.5" fill="#545763"/><rect x="301.0" y="588.5" width="1.3" height="8.5" fill="#545763"/><rect x="326.2" y="585" width="1.3" height="12" fill="#545763"/><rect x="351.4" y="588.5" width="1.3" height="8.5" fill="#545763"/><rect x="376.7" y="588.5" width="1.3" height="8.5" fill="#545763"/><rect x="401.9" y="588.5" width="1.3" height="8.5" fill="#545763"/><rect x="427.1" y="588.5" width="1.3" height="8.5" fill="#545763"/><rect x="452.3" y="585" width="1.3" height="12" fill="#545763"/><rect x="477.6" y="588.5" width="1.3" height="8.5" fill="#545763"/><rect x="502.8" y="588.5" width="1.3" height="8.5" fill="#545763"/><rect x="528.0" y="588.5" width="1.3" height="8.5" fill="#545763"/><rect x="553.3" y="588.5" width="1.3" height="8.5" fill="#545763"/><rect x="578.5" y="585" width="1.3" height="12" fill="#545763"/><rect x="603.7" y="588.5" width="1.3" height="8.5" fill="#545763"/><rect x="629.0" y="588.5" width="1.3" height="8.5" fill="#545763"/><rect x="654.2" y="588.5" width="1.3" height="8.5" fill="#545763"/><rect x="679.4" y="588.5" width="1.3" height="8.5" fill="#545763"/><rect x="704.6" y="585" width="1.3" height="12" fill="#545763"/><rect x="729.9" y="588.5" width="1.3" height="8.5" fill="#545763"/><rect x="755.1" y="588.5" width="1.3" height="8.5" fill="#545763"/><rect x="780.3" y="588.5" width="1.3" height="8.5" fill="#545763"/><rect x="805.6" y="588.5" width="1.3" height="8.5" fill="#545763"/><rect x="830.8" y="585" width="1.3" height="12" fill="#545763"/><rect x="856.0" y="588.5" width="1.3" height="8.5" fill="#545763"/><rect x="881.3" y="588.5" width="1.3" height="8.5" fill="#545763"/><rect x="906.5" y="588.5" width="1.3" height="8.5" fill="#545763"/><rect x="931.7" y="588.5" width="1.3" height="8.5" fill="#545763"/><rect x="956.9" y="585" width="1.3" height="12" fill="#545763"/><rect x="982.2" y="588.5" width="1.3" height="8.5" fill="#545763"/><rect x="1007.4" y="588.5" width="1.3" height="8.5" fill="#545763"/><rect x="1032.6" y="588.5" width="1.3" height="8.5" fill="#545763"/><rect x="1057.9" y="588.5" width="1.3" height="8.5" fill="#545763"/><rect x="1083.1" y="585" width="1.3" height="12" fill="#545763"/><rect x="1108.3" y="588.5" width="1.3" height="8.5" fill="#545763"/><rect x="1133.6" y="588.5" width="1.3" height="8.5" fill="#545763"/><rect x="1158.8" y="588.5" width="1.3" height="8.5" fill="#545763"/><rect x="1184.0" y="588.5" width="1.3" height="8.5" fill="#545763"/><rect x="1209.2" y="585" width="1.3" height="12" fill="#545763"/><rect x="1234.5" y="588.5" width="1.3" height="8.5" fill="#545763"/><rect x="1259.7" y="588.5" width="1.3" height="8.5" fill="#545763"/><rect x="1284.9" y="588.5" width="1.3" height="8.5" fill="#545763"/><rect x="1310.2" y="588.5" width="1.3" height="8.5" fill="#545763"/><rect x="1335.4" y="585" width="1.3" height="12" fill="#545763"/><rect x="1360.6" y="588.5" width="1.3" height="8.5" fill="#545763"/><rect x="1385.9" y="588.5" width="1.3" height="8.5" fill="#545763"/><rect x="1411.1" y="588.5" width="1.3" height="8.5" fill="#545763"/><rect x="1436.3" y="588.5" width="1.3" height="8.5" fill="#545763"/><rect x="1461.6" y="585" width="1.3" height="12" fill="#545763"/><rect x="1486.8" y="588.5" width="1.3" height="8.5" fill="#545763"/><rect x="1512.0" y="588.5" width="1.3" height="8.5" fill="#545763"/><rect x="1537.2" y="588.5" width="1.3" height="8.5" fill="#545763"/><rect x="1562.5" y="588.5" width="1.3" height="8.5" fill="#545763"/><rect x="1587.7" y="585" width="1.3" height="12" fill="#545763"/><rect x="1612.9" y="588.5" width="1.3" height="8.5" fill="#545763"/><rect x="1638.2" y="588.5" width="1.3" height="8.5" fill="#545763"/><rect x="1663.4" y="588.5" width="1.3" height="8.5" fill="#545763"/><rect x="1688.6" y="588.5" width="1.3" height="8.5" fill="#545763"/><rect x="1713.9" y="585" width="1.3" height="12" fill="#545763"/><rect x="1739.1" y="588.5" width="1.3" height="8.5" fill="#545763"/><rect x="1764.3" y="588.5" width="1.3" height="8.5" fill="#545763"/><rect x="1789.5" y="588.5" width="1.3" height="8.5" fill="#545763"/><rect x="1814.8" y="588.5" width="1.3" height="8.5" fill="#545763"/></svg>
<div class="t" style="left:74.0px;top:573px;font-size:13px;color:#878995;letter-spacing:1.1px;-webkit-text-stroke:0.2px #878995">00:00:00</div>
<div class="t" style="left:200.2px;top:573px;font-size:13px;color:#878995;letter-spacing:1.1px;-webkit-text-stroke:0.2px #878995">00:00:05</div>
<div class="t" style="left:326.3px;top:573px;font-size:13px;color:#878995;letter-spacing:1.1px;-webkit-text-stroke:0.2px #878995">00:00:10</div>
<div class="t" style="left:452.5px;top:573px;font-size:13px;color:#878995;letter-spacing:1.1px;-webkit-text-stroke:0.2px #878995">00:00:15</div>
<div class="t" style="left:578.6px;top:573px;font-size:13px;color:#878995;letter-spacing:1.1px;-webkit-text-stroke:0.2px #878995">00:00:20</div>
<div class="t" style="left:704.8px;top:573px;font-size:13px;color:#878995;letter-spacing:1.1px;-webkit-text-stroke:0.2px #878995">00:00:25</div>
<div class="t" style="left:830.9px;top:573px;font-size:13px;color:#878995;letter-spacing:1.1px;-webkit-text-stroke:0.2px #878995">00:00:30</div>
<div class="t" style="left:957.1px;top:573px;font-size:13px;color:#878995;letter-spacing:1.1px;-webkit-text-stroke:0.2px #878995">00:00:35</div>
<div class="t" style="left:1083.2px;top:573px;font-size:13px;color:#878995;letter-spacing:1.1px;-webkit-text-stroke:0.2px #878995">00:00:40</div>
<div class="t" style="left:1209.4px;top:573px;font-size:13px;color:#878995;letter-spacing:1.1px;-webkit-text-stroke:0.2px #878995">00:00:45</div>
<div class="t" style="left:1335.5px;top:573px;font-size:13px;color:#878995;letter-spacing:1.1px;-webkit-text-stroke:0.2px #878995">00:00:50</div>
<div class="t" style="left:1461.7px;top:573px;font-size:13px;color:#878995;letter-spacing:1.1px;-webkit-text-stroke:0.2px #878995">00:00:55</div>
<div class="t" style="left:1587.8px;top:573px;font-size:13px;color:#878995;letter-spacing:1.1px;-webkit-text-stroke:0.2px #878995">00:01:00</div>
<div class="t" style="left:1714.0px;top:573px;font-size:13px;color:#878995;letter-spacing:1.1px;-webkit-text-stroke:0.2px #878995">00:01:05</div>
<div class="a" style="left:68px;top:598px;width:1760px;height:59px;background:#1a1d25"></div>
<div class="a" style="left:68px;top:790px;width:1760px;height:255px;background:#1a1d25"></div>
<svg class="ic" style="left:0;top:0" width="68" height="860">
 <path d="M4.5 618h17M13 618v18.5" stroke="#4c4f5b" stroke-width="2" fill="none"/>
 <g fill="#c4c5d6">
  <path d="M33.8 617C35.8 613.6 38.5 611.8 41.5 611.8S47.2 613.6 49.2 617C47.2 620.4 44.5 622.2 41.5 622.2S35.8 620.4 33.8 617Z"/>
  <path d="M33.8 703.5C35.8 700.1 38.5 698.3 41.5 698.3S47.2 700.1 49.2 703.5C47.2 706.9 44.5 708.7 41.5 708.7S35.8 706.9 33.8 703.5Z"/>
 </g>
 <g fill="none" stroke="#121318" stroke-width="1.1"><circle cx="41.5" cy="617" r="3.1"/><circle cx="41.5" cy="703.5" r="3.1"/></g>
 <g fill="none" stroke="#c4c5d6" stroke-linecap="round" stroke-linejoin="round" stroke-width="2.4">
  <path d="M37.3 632.8A5.5 5.5 0 0 0 37.3 641.6M45.7 632.8A5.5 5.5 0 0 1 45.7 641.6"/>
  <path d="M38.5 637.2h6"/>
  <path d="M48.5 744.5H35M39.8 739.5l-5 5 5 5"/>
  <path d="M44.6 720.3A5 5 0 0 1 44.6 728.5M44.6 808.3A5 5 0 0 1 44.6 816.5"/>
  <path d="M37.3 828A5.2 5.2 0 0 0 37.8 838M45.7 828A5.2 5.2 0 0 1 45.2 838"/>
 </g>
 <path d="M34.5 839.5L48 826" stroke="#c4c5d6" stroke-width="1.6" stroke-linecap="round"/>
 <g fill="#c4c5d6">
  <path d="M33.9 720.5h3.6l5 -3v13l-5 -3h-3.6z"/>
  <path d="M33.9 808.8h3.6l5 -3v13l-5 -3h-3.6z"/>
 </g>
 <g fill="#4c4f5b">
  <rect x="7.5" y="714" width="10" height="8" rx="1"/><rect x="7.5" y="724" width="10" height="8" rx="1"/>
  <rect x="3.5" y="714" width="2" height="3"/><rect x="3.5" y="719.5" width="2" height="3"/><rect x="3.5" y="725" width="2" height="3"/><rect x="3.5" y="730" width="2" height="3"/>
  <rect x="19.5" y="714" width="2" height="3"/><rect x="19.5" y="719.5" width="2" height="3"/><rect x="19.5" y="725" width="2" height="3"/><rect x="19.5" y="730" width="2" height="3"/>
  <circle cx="6.8" cy="829" r="2.8"/><circle cx="17.6" cy="826.5" r="2.8"/>
 </g>
 <path d="M8.6 829V815.5l11 -2.3V826.5" fill="none" stroke="#4c4f5b" stroke-width="2.2" stroke-linejoin="round"/>
</svg>
<div class="a" style="left:75.5px;top:668.5px;width:114.5px;height:62px;border-radius:8px;background:#5263c8;overflow:hidden"><div class="a" style="left:2.5px;top:2.5px;width:109.5px;height:57px;border-radius:6px;overflow:hidden;background:radial-gradient(ellipse 25% 70% at 68% 45%,#20acf4 0%,rgba(32,172,244,0) 100%),linear-gradient(90deg,#58c0ec 0%,#44b6ec 40%,#30b0f0 70%,#48bcec 100%)"><svg class="ic" width="110" height="60"><ellipse cx="39" cy="19" rx="10" ry="8.5" fill="#1a1410"/><ellipse cx="40" cy="22" rx="4" ry="5" fill="#8a5a40"/><path d="M27 30C29 27 35 26.5 40 27C46 27.5 50 29 50 34L50 57L28 57Z" fill="#e0ac1c"/></svg></div></div>
<div class="a" style="left:192.5px;top:668.5px;width:316.5px;height:62px;border-radius:8px 8px 0 0;background:#5263c8;overflow:hidden"><div class="a" style="left:2.5px;top:2.5px;width:311.5px;height:57px;border-radius:6px 6px 0 0;overflow:hidden;background:#b8a070"><div class="a" style="left:0;top:0;width:97px;height:57px;background:linear-gradient(180deg,#6aa8d8 0%,#a8c4dc 30%,#c8ccd0 55%,#9a9a90 62%,#b89c68 66%,#a88c58 100%)"></div><svg class="ic" style="left:0;top:0" width="97" height="57"><path d="M32.0 45.0C30.0 29.0 33.0 19 41 19C49.0 19 52.0 29.0 50.0 45.0Z" fill="#c89048"/><ellipse cx="41" cy="31.0" rx="4.5" ry="6.0" fill="#d8a880"/><path d="M24.0 57C24.0 49.0 29.0 43.0 41 42.0C53.0 43.0 58.0 49.0 58.0 57Z" fill="#6a1420"/><path d="M35.0 41.0L41 53.0L47.0 41.0Z" fill="#c89048"/></svg><div class="a" style="left:97px;top:0;width:100px;height:57px;background:linear-gradient(180deg,#c4c4c6 0%,#cfcfcf 28%,#8a8a84 38%,#b49a60 44%,#a89050 100%)"></div><svg class="ic" style="left:97px;top:0" width="100" height="57"><path d="M40 24Q70 14 100 22L100 28L40 28Z" fill="#707068" opacity="0.7"/><path d="M36.55 41.3C34.45 24.5 37.6 14 46 14C54.4 14 57.55 24.5 55.45 41.3Z" fill="#c89048"/><ellipse cx="46" cy="26.6" rx="4.7250000000000005" ry="6.300000000000001" fill="#d8a880"/><path d="M28.15 57C28.15 45.5 33.4 39.2 46 38.150000000000006C58.6 39.2 63.85 45.5 63.85 57Z" fill="#6a1420"/><path d="M39.7 37.1L46 49.7L52.3 37.1Z" fill="#c89048"/></svg><div class="a" style="left:197px;top:0;width:100px;height:57px;background:linear-gradient(180deg,#cacaca 0%,#b8b4a8 16%,#b09860 24%,#a08a50 100%)"></div><svg class="ic" style="left:197px;top:0" width="100" height="57"><path d="M40 10Q70 2 100 10L100 14L40 14Z" fill="#686860" opacity="0.7"/><path d="M33.1 39.6C30.9 22.0 34.2 11 43 11C51.8 11 55.1 22.0 52.9 39.6Z" fill="#c89048"/><ellipse cx="43" cy="24.200000000000003" rx="4.95" ry="6.6000000000000005" fill="#d8a880"/><path d="M24.299999999999997 57C24.299999999999997 44.0 29.799999999999997 37.400000000000006 43 36.3C56.2 37.400000000000006 61.7 44.0 61.7 57Z" fill="#6a1420"/><path d="M36.4 35.2L43 48.400000000000006L49.6 35.2Z" fill="#c89048"/></svg><div class="a" style="left:297px;top:0;width:15px;height:57px;background:#b09a60"></div></div></div>
<div class="a" style="left:512px;top:668.5px;width:96.5px;height:62px;border-radius:8px;background:#5263c8;overflow:hidden"><div class="a" style="left:2.5px;top:2.5px;width:91.5px;height:57px;border-radius:6px;overflow:hidden;background:#e08010"><div class="a" style="left:0;top:0;width:66px;height:57px;background:linear-gradient(90deg,#e07010 0%,#f8b010 15%,#e88010 28%,#b03808 45%,#c05010 70%,#e89010 100%)"></div><svg class="ic" width="92" height="57"><path d="M22 0L62 0L64 30C56 38 44 40 34 34C26 28 20 14 22 0Z" fill="#8a2a08" opacity="0.85"/><ellipse cx="36" cy="26" rx="7" ry="9" fill="#d0704a"/><path d="M24 57L28 40C36 34 50 34 58 40L66 57Z" fill="#f4c818"/><path d="M10 57L18 34L22 34L15 57Z" fill="#ffe020"/><path d="M24 40L30 36L34 44L28 48Z" fill="#90c8d8" opacity="0.8"/></svg><div class="a" style="left:66px;top:0;width:26px;height:57px;background:linear-gradient(90deg,#5a2008 0%,#e89010 40%,#f0a818 70%,#d87010 100%)"></div><svg class="ic" style="left:66px;top:0" width="26" height="57"><path d="M6 57L14 34L18 34L11 57Z" fill="#ffe020"/></svg></div></div>
<div class="a" style="left:612px;top:668.5px;width:495.5px;height:62px;border-radius:8px 8px 0 0;background:#5263c8;overflow:hidden"><div class="a" style="left:2.5px;top:2.5px;width:490.5px;height:57px;border-radius:6px 6px 0 0;overflow:hidden;background:#2060b0"><div class="a" style="left:0;top:0;width:97px;height:57px;background:linear-gradient(180deg,#a8c0d0 0%,#c0c8c8 40%,#8a8078 52%,#b05a48 60%,#a84a3c 100%)"></div><svg class="ic" width="97" height="57"><path d="M0 0H34V38H0Z" fill="#a89484" opacity="0.8"/><path d="M84 0H97V45H84Z" fill="#707850" opacity="0.7"/><path d="M8 24l6 -6 6 2 2 16 -6 10 4 10h-6l-4 -10 -6 -8z M30 18l6 -6 6 2 2 18 10 18h-6l-8 -14 -6 14h-6l4 -16z M68 24l6 -5 6 2 2 16 8 14h-5l-6 -10 -6 10h-5l4 -14z" fill="#2a2224" opacity="0.85"/><path d="M14 30h10v10h-10zM40 26h10v10h-10zM74 30h9v9h-9z" fill="#d8d0d0" opacity="0.6"/></svg><div class="t" style="left:0;top:20.5px;font-size:8px;font-weight:bold;color:#fff;line-height:7px;text-align:right;width:92px;letter-spacing:0.1px;transform:scaleX(1.18);transform-origin:right">AI BACKGROUND<br>REMOVAL</div><div class="a" style="left:96.5px;top:0;width:101px;height:57px;background:linear-gradient(180deg,#98d0e8 0%,#a8d8e8 20%,#60a868 30%,#d8e0e0 42%,#c0d0d0 70%,#90a890 100%)"></div><svg class="ic" style="left:96.5px;top:0" width="101" height="57"><path d="M36 57C38 44 44 40 50 40C58 40 64 46 66 57Z" fill="#404848"/><path d="M38 18C40 8 52 6 58 12C62 18 62 30 58 40C54 46 44 46 40 40C36 32 36 24 38 18Z" fill="#c89070"/><path d="M40 34C44 46 54 48 58 36L58 44C54 50 44 50 40 44Z" fill="#a07050"/><path d="M36 14C38 4 56 2 62 10L63 16L36 18Z" fill="#4a3a38"/><path d="M66 40L78 20L80 22L70 44Z" fill="#d0a080"/><g stroke="#fff" stroke-width="1.3" opacity="0.75"><path d="M6 20v12M12 17v18M18 22v8M24 18v14M30 21v9M70 19v13M76 16v18M82 21v10M88 18v14M94 22v8"/></g></svg><div class="t" style="left:100px;top:41px;font-size:8px;font-weight:bold;color:#fff;line-height:7px;transform:scaleX(1.2);transform-origin:left">AI NOISE<br>&nbsp;&nbsp;&nbsp;&nbsp;&nbsp;&nbsp;REMOVAL</div><div class="a" style="left:197.5px;top:0;width:100.5px;height:57px;background:#101116"></div><svg class="ic" style="left:197.5px;top:0" width="101" height="57"><rect x="15" y="0.5" width="25" height="13" rx="1" fill="#c02830"/><path d="M24 4l6 3 -6 3z" fill="#fff"/><rect x="43" y="0.5" width="25" height="13" rx="1" fill="#6a40a8"/><rect x="70" y="0.5" width="25" height="13" rx="1" fill="#d8b898"/><rect x="15" y="22" width="25" height="13" rx="1" fill="#6a58a0"/><rect x="43" y="22" width="25" height="13" rx="1" fill="#3a1848" stroke="#a03080" stroke-width="0.8"/><rect x="70" y="22" width="25" height="13" rx="1" fill="#d05838"/><g fill="#505058"><circle cx="16" cy="49" r="1.5"/><circle cx="22" cy="49" r="1.5"/><circle cx="28" cy="49" r="1.5"/><circle cx="35" cy="49" r="1.5"/><circle cx="41" cy="49" r="1.5"/><circle cx="56" cy="49" r="1.5"/><circle cx="62" cy="49" r="1.5"/><circle cx="75" cy="49" r="1.5"/><circle cx="82" cy="49" r="1.5"/></g><circle cx="6" cy="54" r="1.5" fill="#d02040"/></svg><div class="a" style="left:298px;top:0;width:101px;height:57px;background:radial-gradient(ellipse 60% 50% at 45% 45%,#40c0f0 0%,rgba(64,192,240,0) 100%),linear-gradient(160deg,#c8b8e8 0%,#50b8f0 25%,#2a90e0 50%,#1848c0 75%,#2060c8 100%)"></div><svg class="ic" style="left:298px;top:0" width="101" height="57"><path d="M0 50C30 40 60 20 101 15V57H0Z" fill="#1a40b8" opacity="0.6"/><path d="M30 24C36 14 48 18 54 26C48 32 36 32 30 24Z" fill="#a0d8e8"/><path d="M36 12L40 6L44 8L42 16Z" fill="#c0e0f0"/><rect x="5" y="44" width="46" height="8" fill="#c05048" opacity="0.85"/><rect x="52" y="44" width="44" height="8" fill="#3a8a90" opacity="0.85"/></svg><div class="t" style="left:298px;top:28.5px;font-size:8.5px;font-weight:bold;color:#fff;line-height:7.5px;text-align:right;width:94px;transform:scaleX(1.2);transform-origin:right">LIT<br>OVERLAYS</div><div class="a" style="left:399px;top:0;width:93px;height:57px;background:linear-gradient(180deg,#70c0e8 0%,#3a90d8 50%,#2870c8 100%)"></div><div class="a" style="left:414px;top:4px;width:72px;height:40px;background:#16161c"></div><svg class="ic" style="left:399px;top:0" width="93" height="57"><rect x="30" y="48" width="5" height="5" fill="#40c0e0"/><rect x="36" y="47" width="5" height="5" fill="#2050e0"/><rect x="42" y="45" width="5" height="5" fill="#80d0f0"/><rect x="48" y="48" width="5" height="5" fill="#f0e020"/><rect x="54" y="48" width="5" height="5" fill="#d020d0"/><rect x="60" y="48" width="5" height="5" fill="#30d070"/><rect x="66" y="48" width="5" height="5" fill="#f0a020"/><g fill="#404048"><rect x="18" y="36" width="64" height="2"/></g><circle cx="19" cy="37" r="2" fill="#8060c0"/></svg></div></div>
<div class="a" style="left:1110.5px;top:668.5px;width:100.0px;height:62px;border-radius:8px;background:#5263c8;overflow:hidden"><div class="a" style="left:2.5px;top:2.5px;width:95.0px;height:57px;border-radius:6px;overflow:hidden;background:#1c64c0"><svg class="ic" width="96" height="57"><rect width="96" height="47" fill="#0062b4"/><rect y="38" width="96" height="9" fill="#0858b0"/><rect y="47" width="96" height="10" fill="#c4c4c0"/><path d="M2 44C6 34 12 30 18 32C22 26 30 22 36 26L42 44Z" fill="#6a94a8" opacity="0.75"/><path d="M50 40C54 32 60 30 66 34C70 30 76 32 80 40L82 44Z" fill="#6a94a8" opacity="0.7"/><path d="M84 42C86 36 90 34 96 36V44Z" fill="#6a94a8" opacity="0.6"/><rect x="0" y="37.5" width="96" height="1" fill="#002a78" opacity="0.7"/><path d="M30 20C32 17 36 17 40 19L41 29L31 30Z" fill="#f0c020"/><ellipse cx="38" cy="19" rx="3" ry="2.5" fill="#3a2010"/><path d="M33 30L37 40L40 40L38 30Z" fill="#101828"/></svg></div></div>
<div class="a" style="left:193px;top:733px;width:316px;height:45.5px;border-radius:0 0 8px 8px;background:#4859b0"></div>
<div class="a" style="left:612px;top:733px;width:495.5px;height:45.5px;border-radius:0 0 8px 8px;background:#4859b0;overflow:hidden"><svg class="ic" style="left:0;top:0" width="495.5" height="45.5"><polygon points="0,45.5 0.0,37.9 1.3,37.9 1.3,35.9 2.6,35.9 2.6,28.4 3.9,28.4 3.9,35.5 5.2,35.5 5.2,29.3 6.5,29.3 6.5,34.6 7.8,34.6 7.8,30.5 9.1,30.5 9.1,33.8 10.4,33.8 10.4,16.2 11.7,16.2 11.7,26.3 13.0,26.3 13.0,23.7 14.3,23.7 14.3,27.6 15.6,27.6 15.6,34.7 16.9,34.7 16.9,26.8 18.2,26.8 18.2,25.7 19.5,25.7 19.5,24.6 20.8,24.6 20.8,23.3 22.1,23.3 22.1,21.3 23.4,21.3 23.4,20.8 24.7,20.8 24.7,22.1 26.0,22.1 26.0,21.0 27.3,21.0 27.3,26.7 28.6,26.7 28.6,26.5 29.9,26.5 29.9,26.5 31.2,26.5 31.2,15.6 32.5,15.6 32.5,22.6 33.8,22.6 33.8,20.8 35.1,20.8 35.1,17.5 36.4,17.5 36.4,29.0 37.7,29.0 37.7,15.2 39.0,15.2 39.0,23.3 40.3,23.3 40.3,28.4 41.6,28.4 41.6,27.8 42.9,27.8 42.9,25.2 44.2,25.2 44.2,27.8 45.5,27.8 45.5,26.1 46.8,26.1 46.8,35.4 48.1,35.4 48.1,35.8 49.4,35.8 49.4,35.1 50.7,35.1 50.7,29.1 52.0,29.1 52.0,21.3 53.3,21.3 53.3,25.8 54.6,25.8 54.6,28.8 55.9,28.8 55.9,31.0 57.2,31.0 57.2,30.7 58.5,30.7 58.5,32.8 59.8,32.8 59.8,29.9 61.1,29.9 61.1,35.8 62.4,35.8 62.4,31.1 63.7,31.1 63.7,24.1 65.0,24.1 65.0,29.7 66.3,29.7 66.3,25.6 67.6,25.6 67.6,27.9 68.9,27.9 68.9,24.9 70.2,24.9 70.2,27.3 71.5,27.3 71.5,24.2 72.8,24.2 72.8,25.5 74.1,25.5 74.1,26.5 75.4,26.5 75.4,26.5 76.7,26.5 76.7,30.9 78.0,30.9 78.0,22.7 79.3,22.7 79.3,23.9 80.6,23.9 80.6,25.4 81.9,25.4 81.9,28.8 83.2,28.8 83.2,31.7 84.5,31.7 84.5,12.6 85.8,12.6 85.8,27.3 87.1,27.3 87.1,21.5 88.4,21.5 88.4,34.3 89.7,34.3 89.7,34.0 91.0,34.0 91.0,35.3 92.3,35.3 92.3,34.7 93.6,34.7 93.6,37.9 94.9,37.9 94.9,38.8 96.2,38.8 96.2,35.8 97.5,35.8 97.5,36.0 98.8,36.0 98.8,39.5 100.1,39.5 100.1,38.0 101.4,38.0 101.4,35.6 102.7,35.6 102.7,40.9 104.0,40.9 104.0,40.6 105.3,40.6 105.3,38.4 106.6,38.4 106.6,36.9 107.9,36.9 107.9,44.0 109.2,44.0 109.2,29.3 110.5,29.3 110.5,35.3 111.8,35.3 111.8,33.4 113.1,33.4 113.1,37.1 114.4,37.1 114.4,36.6 115.7,36.6 115.7,38.0 117.0,38.0 117.0,39.5 118.3,39.5 118.3,32.1 119.6,32.1 119.6,32.1 120.9,32.1 120.9,43.8 122.2,43.8 122.2,32.3 123.5,32.3 123.5,33.2 124.8,33.2 124.8,27.4 126.1,27.4 126.1,32.8 127.4,32.8 127.4,27.8 128.7,27.8 128.7,33.1 130.0,33.1 130.0,32.2 131.3,32.2 131.3,40.6 132.6,40.6 132.6,20.9 133.9,20.9 133.9,40.5 135.2,40.5 135.2,36.4 136.5,36.4 136.5,39.0 137.8,39.0 137.8,37.8 139.1,37.8 139.1,38.1 140.4,38.1 140.4,37.0 141.7,37.0 141.7,41.9 143.0,41.9 143.0,35.6 144.3,35.6 144.3,35.8 145.6,35.8 145.6,41.0 146.9,41.0 146.9,37.3 148.2,37.3 148.2,39.0 149.5,39.0 149.5,37.0 150.8,37.0 150.8,35.2 152.1,35.2 152.1,32.9 153.4,32.9 153.4,33.1 154.7,33.1 154.7,37.3 156.0,37.3 156.0,35.1 157.3,35.1 157.3,37.6 158.6,37.6 158.6,29.5 159.9,29.5 159.9,26.7 161.2,26.7 161.2,26.7 162.5,26.7 162.5,25.7 163.8,25.7 163.8,29.6 165.1,29.6 165.1,24.9 166.4,24.9 166.4,29.7 167.7,29.7 167.7,23.5 169.0,23.5 169.0,26.9 170.3,26.9 170.3,25.6 171.6,25.6 171.6,26.5 172.9,26.5 172.9,24.2 174.2,24.2 174.2,26.7 175.5,26.7 175.5,28.3 176.8,28.3 176.8,24.5 178.1,24.5 178.1,23.3 179.4,23.3 179.4,19.6 180.7,19.6 180.7,16.6 182.0,16.6 182.0,18.3 183.3,18.3 183.3,18.9 184.6,18.9 184.6,18.4 185.9,18.4 185.9,9.3 187.2,9.3 187.2,18.8 188.5,18.8 188.5,23.7 189.8,23.7 189.8,23.8 191.1,23.8 191.1,24.1 192.4,24.1 192.4,22.5 193.7,22.5 193.7,20.5 195.0,20.5 195.0,26.3 196.3,26.3 196.3,18.8 197.6,18.8 197.6,22.4 198.9,22.4 198.9,12.9 200.2,12.9 200.2,18.8 201.5,18.8 201.5,22.2 202.8,22.2 202.8,22.5 204.1,22.5 204.1,16.0 205.4,16.0 205.4,23.6 206.7,23.6 206.7,19.3 208.0,19.3 208.0,23.4 209.3,23.4 209.3,22.3 210.6,22.3 210.6,23.5 211.9,23.5 211.9,19.6 213.2,19.6 213.2,23.6 214.5,23.6 214.5,21.6 215.8,21.6 215.8,24.9 217.1,24.9 217.1,23.4 218.4,23.4 218.4,21.1 219.7,21.1 219.7,22.6 221.0,22.6 221.0,12.6 222.3,12.6 222.3,24.9 223.6,24.9 223.6,28.7 224.9,28.7 224.9,28.8 226.2,28.8 226.2,28.9 227.5,28.9 227.5,27.0 228.8,27.0 228.8,28.7 230.1,28.7 230.1,21.3 231.4,21.3 231.4,26.4 232.7,26.4 232.7,21.5 234.0,21.5 234.0,19.3 235.3,19.3 235.3,33.0 236.6,33.0 236.6,23.8 237.9,23.8 237.9,25.7 239.2,25.7 239.2,32.8 240.5,32.8 240.5,24.7 241.8,24.7 241.8,23.3 243.1,23.3 243.1,24.8 244.4,24.8 244.4,26.5 245.7,26.5 245.7,26.7 247.0,26.7 247.0,26.0 248.3,26.0 248.3,26.6 249.6,26.6 249.6,9.9 250.9,9.9 250.9,19.6 252.2,19.6 252.2,23.0 253.5,23.0 253.5,22.0 254.8,22.0 254.8,26.3 256.1,26.3 256.1,25.1 257.4,25.1 257.4,29.3 258.7,29.3 258.7,28.2 260.0,28.2 260.0,33.8 261.3,33.8 261.3,26.5 262.6,26.5 262.6,24.3 263.9,24.3 263.9,32.4 265.2,32.4 265.2,23.7 266.5,23.7 266.5,29.7 267.8,29.7 267.8,11.4 269.1,11.4 269.1,27.2 270.4,27.2 270.4,23.6 271.7,23.6 271.7,19.8 273.0,19.8 273.0,20.5 274.3,20.5 274.3,20.9 275.6,20.9 275.6,20.0 276.9,20.0 276.9,16.3 278.2,16.3 278.2,17.6 279.5,17.6 279.5,4.8 280.8,4.8 280.8,7.4 282.1,7.4 282.1,16.4 283.4,16.4 283.4,18.2 284.7,18.2 284.7,18.9 286.0,18.9 286.0,18.8 287.3,18.8 287.3,10.1 288.6,10.1 288.6,12.4 289.9,12.4 289.9,8.7 291.2,8.7 291.2,20.6 292.5,20.6 292.5,15.6 293.8,15.6 293.8,19.5 295.1,19.5 295.1,8.7 296.4,8.7 296.4,16.1 297.7,16.1 297.7,18.7 299.0,18.7 299.0,17.4 300.3,17.4 300.3,15.1 301.6,15.1 301.6,4.6 302.9,4.6 302.9,22.0 304.2,22.0 304.2,6.9 305.5,6.9 305.5,22.6 306.8,22.6 306.8,19.5 308.1,19.5 308.1,21.4 309.4,21.4 309.4,20.8 310.7,20.8 310.7,29.9 312.0,29.9 312.0,15.6 313.3,15.6 313.3,15.2 314.6,15.2 314.6,15.1 315.9,15.1 315.9,19.3 317.2,19.3 317.2,16.6 318.5,16.6 318.5,19.1 319.8,19.1 319.8,21.2 321.1,21.2 321.1,22.6 322.4,22.6 322.4,20.1 323.7,20.1 323.7,18.3 325.0,18.3 325.0,19.8 326.3,19.8 326.3,21.7 327.6,21.7 327.6,14.0 328.9,14.0 328.9,24.0 330.2,24.0 330.2,17.3 331.5,17.3 331.5,14.1 332.8,14.1 332.8,13.7 334.1,13.7 334.1,16.8 335.4,16.8 335.4,19.5 336.7,19.5 336.7,10.5 338.0,10.5 338.0,15.8 339.3,15.8 339.3,8.8 340.6,8.8 340.6,14.4 341.9,14.4 341.9,11.1 343.2,11.1 343.2,14.6 344.5,14.6 344.5,24.8 345.8,24.8 345.8,20.2 347.1,20.2 347.1,32.5 348.4,32.5 348.4,23.7 349.7,23.7 349.7,30.1 351.0,30.1 351.0,22.3 352.3,22.3 352.3,25.5 353.6,25.5 353.6,26.4 354.9,26.4 354.9,36.9 356.2,36.9 356.2,26.2 357.5,26.2 357.5,26.6 358.8,26.6 358.8,26.7 360.1,26.7 360.1,26.3 361.4,26.3 361.4,23.2 362.7,23.2 362.7,24.1 364.0,24.1 364.0,26.3 365.3,26.3 365.3,27.6 366.6,27.6 366.6,23.5 367.9,23.5 367.9,27.6 369.2,27.6 369.2,23.9 370.5,23.9 370.5,24.6 371.8,24.6 371.8,24.1 373.1,24.1 373.1,25.1 374.4,25.1 374.4,25.1 375.7,25.1 375.7,24.8 377.0,24.8 377.0,17.6 378.3,17.6 378.3,24.7 379.6,24.7 379.6,23.8 380.9,23.8 380.9,22.5 382.2,22.5 382.2,21.9 383.5,21.9 383.5,23.9 384.8,23.9 384.8,20.6 386.1,20.6 386.1,28.8 387.4,28.8 387.4,21.7 388.7,21.7 388.7,8.5 390.0,8.5 390.0,17.7 391.3,17.7 391.3,18.7 392.6,18.7 392.6,21.0 393.9,21.0 393.9,14.2 395.2,14.2 395.2,14.6 396.5,14.6 396.5,10.9 397.8,10.9 397.8,16.6 399.1,16.6 399.1,19.0 400.4,19.0 400.4,23.1 401.7,23.1 401.7,25.2 403.0,25.2 403.0,23.9 404.3,23.9 404.3,24.2 405.6,24.2 405.6,10.5 406.9,10.5 406.9,18.0 408.2,18.0 408.2,19.6 409.5,19.6 409.5,20.3 410.8,20.3 410.8,20.4 412.1,20.4 412.1,22.7 413.4,22.7 413.4,20.8 414.7,20.8 414.7,19.5 416.0,19.5 416.0,18.5 417.3,18.5 417.3,22.4 418.6,22.4 418.6,21.5 419.9,21.5 419.9,23.9 421.2,23.9 421.2,20.7 422.5,20.7 422.5,23.5 423.8,23.5 423.8,26.1 425.1,26.1 425.1,30.0 426.4,30.0 426.4,25.4 427.7,25.4 427.7,26.9 429.0,26.9 429.0,24.7 430.3,24.7 430.3,30.4 431.6,30.4 431.6,30.4 432.9,30.4 432.9,33.6 434.2,33.6 434.2,33.2 435.5,33.2 435.5,21.6 436.8,21.6 436.8,31.6 438.1,31.6 438.1,29.5 439.4,29.5 439.4,39.1 440.7,39.1 440.7,35.4 442.0,35.4 442.0,35.7 443.3,35.7 443.3,30.5 444.6,30.5 444.6,34.9 445.9,34.9 445.9,33.2 447.2,33.2 447.2,32.5 448.5,32.5 448.5,30.5 449.8,30.5 449.8,34.2 451.1,34.2 451.1,26.7 452.4,26.7 452.4,30.4 453.7,30.4 453.7,34.8 455.0,34.8 455.0,36.1 456.3,36.1 456.3,17.7 457.6,17.7 457.6,25.2 458.9,25.2 458.9,28.9 460.2,28.9 460.2,30.4 461.5,30.4 461.5,37.5 462.8,37.5 462.8,38.3 464.1,38.3 464.1,36.4 465.4,36.4 465.4,33.8 466.7,33.8 466.7,39.3 468.0,39.3 468.0,38.7 469.3,38.7 469.3,35.0 470.6,35.0 470.6,32.9 471.9,32.9 471.9,26.8 473.2,26.8 473.2,29.9 474.5,29.9 474.5,33.5 475.8,33.5 475.8,37.2 477.1,37.2 477.1,27.7 478.4,27.7 478.4,34.1 479.7,34.1 479.7,37.2 481.0,37.2 481.0,37.5 482.3,37.5 482.3,34.1 483.6,34.1 483.6,20.9 484.9,20.9 484.9,29.0 486.2,29.0 486.2,29.9 487.5,29.9 487.5,31.2 488.8,31.2 488.8,30.2 490.1,30.2 490.1,31.9 491.4,31.9 491.4,21.5 492.7,21.5 492.7,33.9 494.0,33.9 494.0,34.1 495.3,34.1 495.3,34.3 496.6,34.3 495.5,45.5" fill="#a3abf0"/></svg></div>
<div class="a" style="left:75.5px;top:800px;width:535.0px;height:45.5px;border-radius:8px;background:#0f8c80;overflow:hidden"><svg class="ic" style="left:0;top:0" width="535.0" height="45.5"><polygon points="0,45.5 0.0,28.8 1.3,28.8 1.3,26.2 2.6,26.2 2.6,29.0 3.9,29.0 3.9,29.2 5.2,29.2 5.2,21.5 6.5,21.5 6.5,34.4 7.8,34.4 7.8,32.5 9.1,32.5 9.1,34.5 10.4,34.5 10.4,35.1 11.7,35.1 11.7,34.3 13.0,34.3 13.0,34.6 14.3,34.6 14.3,34.5 15.6,34.5 15.6,32.3 16.9,32.3 16.9,33.5 18.2,33.5 18.2,26.6 19.5,26.6 19.5,33.4 20.8,33.4 20.8,27.1 22.1,27.1 22.1,35.9 23.4,35.9 23.4,38.5 24.7,38.5 24.7,30.0 26.0,30.0 26.0,34.6 27.3,34.6 27.3,37.0 28.6,37.0 28.6,36.1 29.9,36.1 29.9,38.1 31.2,38.1 31.2,37.1 32.5,37.1 32.5,32.9 33.8,32.9 33.8,33.5 35.1,33.5 35.1,33.7 36.4,33.7 36.4,33.4 37.7,33.4 37.7,34.1 39.0,34.1 39.0,31.9 40.3,31.9 40.3,36.1 41.6,36.1 41.6,34.0 42.9,34.0 42.9,34.5 44.2,34.5 44.2,34.6 45.5,34.6 45.5,39.5 46.8,39.5 46.8,39.6 48.1,39.6 48.1,38.1 49.4,38.1 49.4,39.8 50.7,39.8 50.7,36.9 52.0,36.9 52.0,37.4 53.3,37.4 53.3,30.7 54.6,30.7 54.6,34.1 55.9,34.1 55.9,35.4 57.2,35.4 57.2,38.4 58.5,38.4 58.5,41.3 59.8,41.3 59.8,41.7 61.1,41.7 61.1,36.5 62.4,36.5 62.4,39.6 63.7,39.6 63.7,37.3 65.0,37.3 65.0,43.0 66.3,43.0 66.3,38.3 67.6,38.3 67.6,42.3 68.9,42.3 68.9,36.8 70.2,36.8 70.2,37.3 71.5,37.3 71.5,37.8 72.8,37.8 72.8,39.4 74.1,39.4 74.1,38.2 75.4,38.2 75.4,38.0 76.7,38.0 76.7,37.4 78.0,37.4 78.0,36.6 79.3,36.6 79.3,37.4 80.6,37.4 80.6,39.2 81.9,39.2 81.9,37.8 83.2,37.8 83.2,36.1 84.5,36.1 84.5,35.2 85.8,35.2 85.8,37.0 87.1,37.0 87.1,39.0 88.4,39.0 88.4,37.0 89.7,37.0 89.7,35.4 91.0,35.4 91.0,33.9 92.3,33.9 92.3,36.1 93.6,36.1 93.6,37.2 94.9,37.2 94.9,32.1 96.2,32.1 96.2,36.6 97.5,36.6 97.5,35.1 98.8,35.1 98.8,32.8 100.1,32.8 100.1,30.6 101.4,30.6 101.4,33.1 102.7,33.1 102.7,29.9 104.0,29.9 104.0,23.1 105.3,23.1 105.3,29.5 106.6,29.5 106.6,24.1 107.9,24.1 107.9,30.7 109.2,30.7 109.2,29.7 110.5,29.7 110.5,34.9 111.8,34.9 111.8,34.9 113.1,34.9 113.1,31.8 114.4,31.8 114.4,31.8 115.7,31.8 115.7,19.7 117.0,19.7 117.0,36.6 118.3,36.6 118.3,32.0 119.6,32.0 119.6,32.6 120.9,32.6 120.9,34.4 122.2,34.4 122.2,34.4 123.5,34.4 123.5,34.8 124.8,34.8 124.8,33.3 126.1,33.3 126.1,33.8 127.4,33.8 127.4,33.1 128.7,33.1 128.7,34.6 130.0,34.6 130.0,27.7 131.3,27.7 131.3,34.8 132.6,34.8 132.6,39.1 133.9,39.1 133.9,29.3 135.2,29.3 135.2,30.2 136.5,30.2 136.5,31.2 137.8,31.2 137.8,27.9 139.1,27.9 139.1,26.5 140.4,26.5 140.4,29.5 141.7,29.5 141.7,31.0 143.0,31.0 143.0,30.0 144.3,30.0 144.3,29.6 145.6,29.6 145.6,33.2 146.9,33.2 146.9,31.2 148.2,31.2 148.2,31.1 149.5,31.1 149.5,31.1 150.8,31.1 150.8,29.0 152.1,29.0 152.1,34.4 153.4,34.4 153.4,29.8 154.7,29.8 154.7,34.7 156.0,34.7 156.0,35.2 157.3,35.2 157.3,35.4 158.6,35.4 158.6,35.0 159.9,35.0 159.9,36.0 161.2,36.0 161.2,35.1 162.5,35.1 162.5,34.7 163.8,34.7 163.8,35.4 165.1,35.4 165.1,37.4 166.4,37.4 166.4,35.2 167.7,35.2 167.7,33.1 169.0,33.1 169.0,33.3 170.3,33.3 170.3,35.2 171.6,35.2 171.6,33.2 172.9,33.2 172.9,35.3 174.2,35.3 174.2,37.6 175.5,37.6 175.5,37.2 176.8,37.2 176.8,38.0 178.1,38.0 178.1,34.5 179.4,34.5 179.4,34.7 180.7,34.7 180.7,34.0 182.0,34.0 182.0,28.4 183.3,28.4 183.3,33.7 184.6,33.7 184.6,32.3 185.9,32.3 185.9,25.4 187.2,25.4 187.2,32.7 188.5,32.7 188.5,34.2 189.8,34.2 189.8,37.4 191.1,37.4 191.1,36.2 192.4,36.2 192.4,35.3 193.7,35.3 193.7,22.7 195.0,22.7 195.0,32.7 196.3,32.7 196.3,34.5 197.6,34.5 197.6,32.3 198.9,32.3 198.9,31.1 200.2,31.1 200.2,31.7 201.5,31.7 201.5,31.2 202.8,31.2 202.8,31.9 204.1,31.9 204.1,36.3 205.4,36.3 205.4,36.6 206.7,36.6 206.7,32.6 208.0,32.6 208.0,32.3 209.3,32.3 209.3,32.9 210.6,32.9 210.6,30.1 211.9,30.1 211.9,30.9 213.2,30.9 213.2,31.8 214.5,31.8 214.5,27.5 215.8,27.5 215.8,35.6 217.1,35.6 217.1,32.7 218.4,32.7 218.4,32.5 219.7,32.5 219.7,21.8 221.0,21.8 221.0,30.2 222.3,30.2 222.3,37.4 223.6,37.4 223.6,35.6 224.9,35.6 224.9,32.5 226.2,32.5 226.2,34.0 227.5,34.0 227.5,34.0 228.8,34.0 228.8,35.0 230.1,35.0 230.1,35.0 231.4,35.0 231.4,32.6 232.7,32.6 232.7,31.7 234.0,31.7 234.0,32.3 235.3,32.3 235.3,32.6 236.6,32.6 236.6,33.5 237.9,33.5 237.9,33.9 239.2,33.9 239.2,40.1 240.5,40.1 240.5,35.1 241.8,35.1 241.8,39.4 243.1,39.4 243.1,41.3 244.4,41.3 244.4,38.7 245.7,38.7 245.7,38.0 247.0,38.0 247.0,43.0 248.3,43.0 248.3,41.1 249.6,41.1 249.6,39.4 250.9,39.4 250.9,39.7 252.2,39.7 252.2,42.3 253.5,42.3 253.5,36.8 254.8,36.8 254.8,39.4 256.1,39.4 256.1,35.1 257.4,35.1 257.4,40.5 258.7,40.5 258.7,41.0 260.0,41.0 260.0,40.0 261.3,40.0 261.3,43.4 262.6,43.4 262.6,39.2 263.9,39.2 263.9,42.5 265.2,42.5 265.2,39.9 266.5,39.9 266.5,40.3 267.8,40.3 267.8,40.6 269.1,40.6 269.1,32.3 270.4,32.3 270.4,36.8 271.7,36.8 271.7,31.4 273.0,31.4 273.0,41.9 274.3,41.9 274.3,39.4 275.6,39.4 275.6,39.6 276.9,39.6 276.9,40.9 278.2,40.9 278.2,35.5 279.5,35.5 279.5,38.3 280.8,38.3 280.8,38.8 282.1,38.8 282.1,34.9 283.4,34.9 283.4,38.0 284.7,38.0 284.7,37.6 286.0,37.6 286.0,34.7 287.3,34.7 287.3,41.4 288.6,41.4 288.6,28.7 289.9,28.7 289.9,34.9 291.2,34.9 291.2,24.2 292.5,24.2 292.5,27.0 293.8,27.0 293.8,32.7 295.1,32.7 295.1,32.2 296.4,32.2 296.4,34.8 297.7,34.8 297.7,30.9 299.0,30.9 299.0,29.1 300.3,29.1 300.3,31.4 301.6,31.4 301.6,28.6 302.9,28.6 302.9,29.7 304.2,29.7 304.2,28.2 305.5,28.2 305.5,29.0 306.8,29.0 306.8,27.7 308.1,27.7 308.1,32.5 309.4,32.5 309.4,34.8 310.7,34.8 310.7,33.6 312.0,33.6 312.0,38.3 313.3,38.3 313.3,26.5 314.6,26.5 314.6,25.5 315.9,25.5 315.9,35.5 317.2,35.5 317.2,34.4 318.5,34.4 318.5,41.8 319.8,41.8 319.8,35.1 321.1,35.1 321.1,37.5 322.4,37.5 322.4,37.6 323.7,37.6 323.7,37.4 325.0,37.4 325.0,34.5 326.3,34.5 326.3,35.8 327.6,35.8 327.6,34.3 328.9,34.3 328.9,39.1 330.2,39.1 330.2,33.6 331.5,33.6 331.5,38.0 332.8,38.0 332.8,32.2 334.1,32.2 334.1,31.0 335.4,31.0 335.4,33.9 336.7,33.9 336.7,31.2 338.0,31.2 338.0,35.4 339.3,35.4 339.3,34.9 340.6,34.9 340.6,28.9 341.9,28.9 341.9,32.7 343.2,32.7 343.2,23.6 344.5,23.6 344.5,27.6 345.8,27.6 345.8,28.6 347.1,28.6 347.1,33.7 348.4,33.7 348.4,29.9 349.7,29.9 349.7,34.1 351.0,34.1 351.0,28.8 352.3,28.8 352.3,35.2 353.6,35.2 353.6,34.0 354.9,34.0 354.9,35.7 356.2,35.7 356.2,35.1 357.5,35.1 357.5,34.4 358.8,34.4 358.8,34.4 360.1,34.4 360.1,35.2 361.4,35.2 361.4,35.0 362.7,35.0 362.7,32.7 364.0,32.7 364.0,39.8 365.3,39.8 365.3,37.3 366.6,37.3 366.6,31.5 367.9,31.5 367.9,35.0 369.2,35.0 369.2,32.3 370.5,32.3 370.5,34.2 371.8,34.2 371.8,36.0 373.1,36.0 373.1,38.5 374.4,38.5 374.4,32.4 375.7,32.4 375.7,27.7 377.0,27.7 377.0,38.8 378.3,38.8 378.3,34.0 379.6,34.0 379.6,38.2 380.9,38.2 380.9,35.8 382.2,35.8 382.2,38.6 383.5,38.6 383.5,36.3 384.8,36.3 384.8,38.5 386.1,38.5 386.1,32.1 387.4,32.1 387.4,35.6 388.7,35.6 388.7,36.9 390.0,36.9 390.0,40.3 391.3,40.3 391.3,38.2 392.6,38.2 392.6,34.8 393.9,34.8 393.9,39.6 395.2,39.6 395.2,35.1 396.5,35.1 396.5,35.7 397.8,35.7 397.8,34.6 399.1,34.6 399.1,35.3 400.4,35.3 400.4,37.2 401.7,37.2 401.7,37.6 403.0,37.6 403.0,35.8 404.3,35.8 404.3,25.4 405.6,25.4 405.6,15.6 406.9,15.6 406.9,16.5 408.2,16.5 408.2,21.6 409.5,21.6 409.5,16.7 410.8,16.7 410.8,15.5 412.1,15.5 412.1,17.1 413.4,17.1 413.4,15.0 414.7,15.0 414.7,17.1 416.0,17.1 416.0,17.6 417.3,17.6 417.3,9.2 418.6,9.2 418.6,16.8 419.9,16.8 419.9,18.6 421.2,18.6 421.2,21.2 422.5,21.2 422.5,10.0 423.8,10.0 423.8,21.0 425.1,21.0 425.1,10.0 426.4,10.0 426.4,18.9 427.7,18.9 427.7,18.3 429.0,18.3 429.0,19.5 430.3,19.5 430.3,23.7 431.6,23.7 431.6,24.2 432.9,24.2 432.9,11.5 434.2,11.5 434.2,22.6 435.5,22.6 435.5,13.9 436.8,13.9 436.8,22.6 438.1,22.6 438.1,22.9 439.4,22.9 439.4,21.5 440.7,21.5 440.7,21.4 442.0,21.4 442.0,26.0 443.3,26.0 443.3,26.1 444.6,26.1 444.6,16.5 445.9,16.5 445.9,25.5 447.2,25.5 447.2,28.0 448.5,28.0 448.5,17.8 449.8,17.8 449.8,20.5 451.1,20.5 451.1,25.1 452.4,25.1 452.4,24.1 453.7,24.1 453.7,22.5 455.0,22.5 455.0,21.0 456.3,21.0 456.3,9.8 457.6,9.8 457.6,17.3 458.9,17.3 458.9,19.8 460.2,19.8 460.2,13.2 461.5,13.2 461.5,23.4 462.8,23.4 462.8,23.6 464.1,23.6 464.1,24.3 465.4,24.3 465.4,21.9 466.7,21.9 466.7,23.0 468.0,23.0 468.0,21.6 469.3,21.6 469.3,20.4 470.6,20.4 470.6,19.4 471.9,19.4 471.9,21.4 473.2,21.4 473.2,20.1 474.5,20.1 474.5,19.2 475.8,19.2 475.8,21.3 477.1,21.3 477.1,20.9 478.4,20.9 478.4,20.6 479.7,20.6 479.7,19.6 481.0,19.6 481.0,24.5 482.3,24.5 482.3,21.9 483.6,21.9 483.6,24.4 484.9,24.4 484.9,22.6 486.2,22.6 486.2,23.5 487.5,23.5 487.5,23.1 488.8,23.1 488.8,23.4 490.1,23.4 490.1,23.5 491.4,23.5 491.4,21.0 492.7,21.0 492.7,25.2 494.0,25.2 494.0,24.6 495.3,24.6 495.3,22.4 496.6,22.4 496.6,24.5 497.9,24.5 497.9,24.9 499.2,24.9 499.2,24.4 500.5,24.4 500.5,17.0 501.8,17.0 501.8,18.6 503.1,18.6 503.1,21.1 504.4,21.1 504.4,21.3 505.7,21.3 505.7,21.9 507.0,21.9 507.0,23.6 508.3,23.6 508.3,23.3 509.6,23.3 509.6,17.9 510.9,17.9 510.9,20.3 512.2,20.3 512.2,20.5 513.5,20.5 513.5,20.6 514.8,20.6 514.8,21.3 516.1,21.3 516.1,20.0 517.4,20.0 517.4,16.9 518.7,16.9 518.7,20.1 520.0,20.1 520.0,19.7 521.3,19.7 521.3,22.2 522.6,22.2 522.6,21.8 523.9,21.8 523.9,22.4 525.2,22.4 525.2,18.8 526.5,18.8 526.5,19.8 527.8,19.8 527.8,21.9 529.1,21.9 529.1,20.0 530.4,20.0 530.4,16.9 531.7,16.9 531.7,25.2 533.0,25.2 533.0,24.4 534.3,24.4 534.3,25.2 535.6,25.2 535.0,45.5" fill="#86ded2"/></svg><div class="t" style="left:12.5px;top:16px;font-size:16.5px;color:#eef6f4;letter-spacing:0.35px">Atmosphere_Chill_Beat.mp3</div></div>
<div class="a" style="left:1111px;top:800px;width:434.5px;height:45.5px;border-radius:8px;background:#0f8c80;overflow:hidden"><svg class="ic" style="left:0;top:0" width="434.5" height="45.5"><polygon points="0,45.5 0.0,32.7 1.3,32.7 1.3,34.6 2.6,34.6 2.6,33.7 3.9,33.7 3.9,31.4 5.2,31.4 5.2,33.0 6.5,33.0 6.5,22.0 7.8,22.0 7.8,30.2 9.1,30.2 9.1,22.0 10.4,22.0 10.4,15.0 11.7,15.0 11.7,25.9 13.0,25.9 13.0,29.4 14.3,29.4 14.3,21.0 15.6,21.0 15.6,30.7 16.9,30.7 16.9,30.3 18.2,30.3 18.2,28.2 19.5,28.2 19.5,28.4 20.8,28.4 20.8,28.3 22.1,28.3 22.1,31.2 23.4,31.2 23.4,28.9 24.7,28.9 24.7,27.4 26.0,27.4 26.0,31.2 27.3,31.2 27.3,32.8 28.6,32.8 28.6,19.1 29.9,19.1 29.9,18.2 31.2,18.2 31.2,30.7 32.5,30.7 32.5,29.9 33.8,29.9 33.8,27.9 35.1,27.9 35.1,27.8 36.4,27.8 36.4,30.7 37.7,30.7 37.7,24.1 39.0,24.1 39.0,26.1 40.3,26.1 40.3,32.2 41.6,32.2 41.6,29.1 42.9,29.1 42.9,29.0 44.2,29.0 44.2,30.7 45.5,30.7 45.5,31.3 46.8,31.3 46.8,30.5 48.1,30.5 48.1,28.9 49.4,28.9 49.4,30.4 50.7,30.4 50.7,36.0 52.0,36.0 52.0,30.7 53.3,30.7 53.3,28.6 54.6,28.6 54.6,26.0 55.9,26.0 55.9,28.4 57.2,28.4 57.2,28.4 58.5,28.4 58.5,27.8 59.8,27.8 59.8,27.6 61.1,27.6 61.1,26.4 62.4,26.4 62.4,26.8 63.7,26.8 63.7,29.8 65.0,29.8 65.0,27.6 66.3,27.6 66.3,31.2 67.6,31.2 67.6,29.5 68.9,29.5 68.9,29.7 70.2,29.7 70.2,31.4 71.5,31.4 71.5,27.1 72.8,27.1 72.8,18.5 74.1,18.5 74.1,30.8 75.4,30.8 75.4,30.4 76.7,30.4 76.7,31.2 78.0,31.2 78.0,30.8 79.3,30.8 79.3,26.0 80.6,26.0 80.6,30.8 81.9,30.8 81.9,26.4 83.2,26.4 83.2,26.4 84.5,26.4 84.5,28.3 85.8,28.3 85.8,27.4 87.1,27.4 87.1,28.2 88.4,28.2 88.4,27.0 89.7,27.0 89.7,28.4 91.0,28.4 91.0,29.5 92.3,29.5 92.3,30.7 93.6,30.7 93.6,25.7 94.9,25.7 94.9,26.1 96.2,26.1 96.2,30.9 97.5,30.9 97.5,27.8 98.8,27.8 98.8,27.7 100.1,27.7 100.1,29.3 101.4,29.3 101.4,30.2 102.7,30.2 102.7,27.4 104.0,27.4 104.0,26.4 105.3,26.4 105.3,29.4 106.6,29.4 106.6,30.8 107.9,30.8 107.9,30.5 109.2,30.5 109.2,25.2 110.5,25.2 110.5,26.4 111.8,26.4 111.8,30.5 113.1,30.5 113.1,34.9 114.4,34.9 114.4,28.8 115.7,28.8 115.7,26.6 117.0,26.6 117.0,28.7 118.3,28.7 118.3,29.0 119.6,29.0 119.6,29.9 120.9,29.9 120.9,26.2 122.2,26.2 122.2,27.3 123.5,27.3 123.5,27.8 124.8,27.8 124.8,25.2 126.1,25.2 126.1,23.6 127.4,23.6 127.4,27.3 128.7,27.3 128.7,25.6 130.0,25.6 130.0,31.5 131.3,31.5 131.3,28.7 132.6,28.7 132.6,29.0 133.9,29.0 133.9,17.9 135.2,17.9 135.2,25.4 136.5,25.4 136.5,29.4 137.8,29.4 137.8,28.5 139.1,28.5 139.1,30.2 140.4,30.2 140.4,26.4 141.7,26.4 141.7,29.3 143.0,29.3 143.0,28.6 144.3,28.6 144.3,28.4 145.6,28.4 145.6,28.9 146.9,28.9 146.9,28.2 148.2,28.2 148.2,29.3 149.5,29.3 149.5,27.9 150.8,27.9 150.8,28.2 152.1,28.2 152.1,29.3 153.4,29.3 153.4,25.3 154.7,25.3 154.7,30.6 156.0,30.6 156.0,29.6 157.3,29.6 157.3,25.7 158.6,25.7 158.6,27.5 159.9,27.5 159.9,19.8 161.2,19.8 161.2,30.1 162.5,30.1 162.5,31.9 163.8,31.9 163.8,28.5 165.1,28.5 165.1,27.6 166.4,27.6 166.4,28.6 167.7,28.6 167.7,25.7 169.0,25.7 169.0,29.4 170.3,29.4 170.3,30.2 171.6,30.2 171.6,28.5 172.9,28.5 172.9,27.1 174.2,27.1 174.2,31.5 175.5,31.5 175.5,29.2 176.8,29.2 176.8,30.7 178.1,30.7 178.1,29.7 179.4,29.7 179.4,23.8 180.7,23.8 180.7,38.5 182.0,38.5 182.0,28.6 183.3,28.6 183.3,30.8 184.6,30.8 184.6,25.9 185.9,25.9 185.9,29.4 187.2,29.4 187.2,26.8 188.5,26.8 188.5,30.0 189.8,30.0 189.8,30.6 191.1,30.6 191.1,26.3 192.4,26.3 192.4,17.7 193.7,17.7 193.7,13.8 195.0,13.8 195.0,28.0 196.3,28.0 196.3,28.0 197.6,28.0 197.6,28.7 198.9,28.7 198.9,26.4 200.2,26.4 200.2,25.1 201.5,25.1 201.5,26.3 202.8,26.3 202.8,26.4 204.1,26.4 204.1,26.8 205.4,26.8 205.4,34.2 206.7,34.2 206.7,31.9 208.0,31.9 208.0,27.8 209.3,27.8 209.3,25.9 210.6,25.9 210.6,29.7 211.9,29.7 211.9,29.3 213.2,29.3 213.2,26.3 214.5,26.3 214.5,29.2 215.8,29.2 215.8,17.6 217.1,17.6 217.1,30.4 218.4,30.4 218.4,28.9 219.7,28.9 219.7,27.5 221.0,27.5 221.0,29.0 222.3,29.0 222.3,15.4 223.6,15.4 223.6,22.1 224.9,22.1 224.9,26.9 226.2,26.9 226.2,29.6 227.5,29.6 227.5,26.4 228.8,26.4 228.8,27.9 230.1,27.9 230.1,30.2 231.4,30.2 231.4,27.8 232.7,27.8 232.7,21.6 234.0,21.6 234.0,24.4 235.3,24.4 235.3,25.6 236.6,25.6 236.6,25.3 237.9,25.3 237.9,25.3 239.2,25.3 239.2,26.0 240.5,26.0 240.5,27.2 241.8,27.2 241.8,25.2 243.1,25.2 243.1,24.6 244.4,24.6 244.4,26.3 245.7,26.3 245.7,22.8 247.0,22.8 247.0,25.7 248.3,25.7 248.3,26.1 249.6,26.1 249.6,26.7 250.9,26.7 250.9,26.1 252.2,26.1 252.2,24.0 253.5,24.0 253.5,26.8 254.8,26.8 254.8,26.5 256.1,26.5 256.1,26.1 257.4,26.1 257.4,31.5 258.7,31.5 258.7,21.5 260.0,21.5 260.0,24.6 261.3,24.6 261.3,25.5 262.6,25.5 262.6,16.5 263.9,16.5 263.9,22.6 265.2,22.6 265.2,23.5 266.5,23.5 266.5,18.2 267.8,18.2 267.8,19.9 269.1,19.9 269.1,22.2 270.4,22.2 270.4,25.2 271.7,25.2 271.7,24.4 273.0,24.4 273.0,27.7 274.3,27.7 274.3,19.6 275.6,19.6 275.6,22.5 276.9,22.5 276.9,23.3 278.2,23.3 278.2,19.1 279.5,19.1 279.5,16.3 280.8,16.3 280.8,23.3 282.1,23.3 282.1,19.3 283.4,19.3 283.4,20.4 284.7,20.4 284.7,22.8 286.0,22.8 286.0,22.1 287.3,22.1 287.3,20.7 288.6,20.7 288.6,5.6 289.9,5.6 289.9,22.6 291.2,22.6 291.2,25.6 292.5,25.6 292.5,23.0 293.8,23.0 293.8,22.3 295.1,22.3 295.1,26.2 296.4,26.2 296.4,33.4 297.7,33.4 297.7,19.2 299.0,19.2 299.0,32.8 300.3,32.8 300.3,28.6 301.6,28.6 301.6,25.0 302.9,25.0 302.9,14.5 304.2,14.5 304.2,19.9 305.5,19.9 305.5,24.6 306.8,24.6 306.8,28.0 308.1,28.0 308.1,26.5 309.4,26.5 309.4,21.2 310.7,21.2 310.7,25.4 312.0,25.4 312.0,25.5 313.3,25.5 313.3,19.8 314.6,19.8 314.6,25.7 315.9,25.7 315.9,21.2 317.2,21.2 317.2,23.1 318.5,23.1 318.5,22.8 319.8,22.8 319.8,22.6 321.1,22.6 321.1,23.6 322.4,23.6 322.4,23.4 323.7,23.4 323.7,30.2 325.0,30.2 325.0,25.4 326.3,25.4 326.3,23.9 327.6,23.9 327.6,23.9 328.9,23.9 328.9,22.3 330.2,22.3 330.2,23.7 331.5,23.7 331.5,12.8 332.8,12.8 332.8,17.9 334.1,17.9 334.1,23.0 335.4,23.0 335.4,23.8 336.7,23.8 336.7,11.1 338.0,11.1 338.0,22.7 339.3,22.7 339.3,27.6 340.6,27.6 340.6,28.0 341.9,28.0 341.9,27.1 343.2,27.1 343.2,26.3 344.5,26.3 344.5,18.2 345.8,18.2 345.8,22.5 347.1,22.5 347.1,24.8 348.4,24.8 348.4,27.0 349.7,27.0 349.7,27.2 351.0,27.2 351.0,25.1 352.3,25.1 352.3,15.4 353.6,15.4 353.6,21.9 354.9,21.9 354.9,28.8 356.2,28.8 356.2,22.7 357.5,22.7 357.5,37.1 358.8,37.1 358.8,31.9 360.1,31.9 360.1,29.7 361.4,29.7 361.4,26.2 362.7,26.2 362.7,27.5 364.0,27.5 364.0,32.8 365.3,32.8 365.3,30.2 366.6,30.2 366.6,21.2 367.9,21.2 367.9,29.7 369.2,29.7 369.2,37.6 370.5,37.6 370.5,30.3 371.8,30.3 371.8,33.5 373.1,33.5 373.1,29.0 374.4,29.0 374.4,29.5 375.7,29.5 375.7,33.0 377.0,33.0 377.0,29.7 378.3,29.7 378.3,30.3 379.6,30.3 379.6,31.0 380.9,31.0 380.9,30.9 382.2,30.9 382.2,33.4 383.5,33.4 383.5,32.8 384.8,32.8 384.8,33.3 386.1,33.3 386.1,34.5 387.4,34.5 387.4,39.2 388.7,39.2 388.7,35.6 390.0,35.6 390.0,35.4 391.3,35.4 391.3,44.0 392.6,44.0 392.6,39.7 393.9,39.7 393.9,21.9 395.2,21.9 395.2,29.7 396.5,29.7 396.5,35.4 397.8,35.4 397.8,33.7 399.1,33.7 399.1,34.0 400.4,34.0 400.4,33.8 401.7,33.8 401.7,36.6 403.0,36.6 403.0,36.5 404.3,36.5 404.3,35.8 405.6,35.8 405.6,43.9 406.9,43.9 406.9,40.4 408.2,40.4 408.2,36.4 409.5,36.4 409.5,39.8 410.8,39.8 410.8,32.2 412.1,32.2 412.1,34.2 413.4,34.2 413.4,30.4 414.7,30.4 414.7,36.2 416.0,36.2 416.0,44.0 417.3,44.0 417.3,40.6 418.6,40.6 418.6,44.0 419.9,44.0 419.9,44.0 421.2,44.0 421.2,42.7 422.5,42.7 422.5,40.2 423.8,40.2 423.8,41.4 425.1,41.4 425.1,40.3 426.4,40.3 426.4,38.6 427.7,38.6 427.7,39.2 429.0,39.2 429.0,44.0 430.3,44.0 430.3,43.8 431.6,43.8 431.6,41.2 432.9,41.2 432.9,44.0 434.2,44.0 434.2,41.9 435.5,41.9 434.5,45.5" fill="#86ded2"/></svg><div class="t" style="left:12.5px;top:16px;font-size:16.5px;color:#eef6f4;letter-spacing:0.35px">Atmosphere_Chill_Beat.mp3</div></div>
<div class="a" style="left:1154px;top:585px;width:2px;height:455px;background:#e0605a"></div>
<svg class="ic" style="left:0;top:0" width="1920" height="600"><path d="M1148 571a3 3 0 0 1 3 -3h8a3 3 0 0 1 3 3v12l-7 6l-7 -6z" fill="#e8605c"/></svg>
<div class="a" style="left:68px;top:1038.5px;width:1480px;height:6px;border-radius:3px;background:#434859"></div>
<svg class="ic" style="left:0;top:0" width="1920" height="1080"><rect x="1877.5" y="608" width="10" height="3.5" rx="1.5" fill="#4a4d5c"/><rect x="1897.5" y="608" width="10" height="3.5" rx="1.5" fill="#4a4d5c"/><rect x="1877.5" y="622.2" width="10" height="3.6" rx="1.5" fill="#565a6c"/><rect x="1897.5" y="622.2" width="10" height="3.6" rx="1.5" fill="#565a6c"/><rect x="1877.5" y="628.5" width="10" height="3.6" rx="1.5" fill="#565a6c"/><rect x="1897.5" y="628.5" width="10" height="3.6" rx="1.5" fill="#565a6c"/><rect x="1877.5" y="634.8" width="10" height="3.6" rx="1.5" fill="#565a6c"/><rect x="1897.5" y="634.8" width="10" height="3.6" rx="1.5" fill="#565a6c"/><rect x="1877.5" y="641.1" width="10" height="3.6" rx="1.5" fill="#565a6c"/><rect x="1897.5" y="641.1" width="10" height="3.6" rx="1.5" fill="#565a6c"/><rect x="1877.5" y="647.4" width="10" height="3.6" rx="1.5" fill="#565a6c"/><rect x="1897.5" y="647.4" width="10" height="3.6" rx="1.5" fill="#565a6c"/><rect x="1877.5" y="653.7" width="10" height="3.6" rx="1.5" fill="#565a6c"/><rect x="1897.5" y="653.7" width="10" height="3.6" rx="1.5" fill="#565a6c"/><rect x="1877.5" y="660.0" width="10" height="3.6" rx="1.5" fill="#565a6c"/><rect x="1897.5" y="660.0" width="10" height="3.6" rx="1.5" fill="#565a6c"/><rect x="1877.5" y="666.3" width="10" height="3.6" rx="1.5" fill="#565a6c"/><rect x="1897.5" y="666.3" width="10" height="3.6" rx="1.5" fill="#565a6c"/><rect x="1877.5" y="672.6" width="10" height="3.6" rx="1.5" fill="#565a6c"/><rect x="1897.5" y="672.6" width="10" height="3.6" rx="1.5" fill="#565a6c"/><rect x="1877.5" y="678.9" width="10" height="3.6" rx="1.5" fill="#565a6c"/><rect x="1897.5" y="678.9" width="10" height="3.6" rx="1.5" fill="#565a6c"/><rect x="1877.5" y="685.2" width="10" height="3.6" rx="1.5" fill="#565a6c"/><rect x="1897.5" y="685.2" width="10" height="3.6" rx="1.5" fill="#565a6c"/><rect x="1877.5" y="691.5" width="10" height="3.6" rx="1.5" fill="#565a6c"/><rect x="1897.5" y="691.5" width="10" height="3.6" rx="1.5" fill="#565a6c"/><rect x="1877.5" y="697.8" width="10" height="3.6" rx="1.5" fill="#565a6c"/><rect x="1897.5" y="697.8" width="10" height="3.6" rx="1.5" fill="#565a6c"/><rect x="1877.5" y="704.1" width="10" height="3.6" rx="1.5" fill="#565a6c"/><rect x="1897.5" y="704.1" width="10" height="3.6" rx="1.5" fill="#565a6c"/><rect x="1877.5" y="710.4" width="10" height="3.6" rx="1.5" fill="#565a6c"/><rect x="1897.5" y="710.4" width="10" height="3.6" rx="1.5" fill="#565a6c"/><rect x="1877.5" y="716.7" width="10" height="3.6" rx="1.5" fill="#565a6c"/><rect x="1897.5" y="716.7" width="10" height="3.6" rx="1.5" fill="#565a6c"/><rect x="1877.5" y="723.0" width="10" height="3.6" rx="1.5" fill="#565a6c"/><rect x="1897.5" y="723.0" width="10" height="3.6" rx="1.5" fill="#565a6c"/><rect x="1877.5" y="729.3" width="10" height="3.6" rx="1.5" fill="#565a6c"/><rect x="1897.5" y="729.3" width="10" height="3.6" rx="1.5" fill="#565a6c"/><rect x="1877.5" y="735.6" width="10" height="3.6" rx="1.5" fill="#565a6c"/><rect x="1897.5" y="735.6" width="10" height="3.6" rx="1.5" fill="#565a6c"/><rect x="1877.5" y="741.9" width="10" height="3.6" rx="1.5" fill="#565a6c"/><rect x="1897.5" y="741.9" width="10" height="3.6" rx="1.5" fill="#565a6c"/><rect x="1877.5" y="748.2" width="10" height="3.6" rx="1.5" fill="#565a6c"/><rect x="1897.5" y="748.2" width="10" height="3.6" rx="1.5" fill="#565a6c"/><rect x="1877.5" y="754.5" width="10" height="3.6" rx="1.5" fill="#565a6c"/><rect x="1897.5" y="754.5" width="10" height="3.6" rx="1.5" fill="#565a6c"/><rect x="1877.5" y="760.8" width="10" height="3.6" rx="1.5" fill="#565a6c"/><rect x="1897.5" y="760.8" width="10" height="3.6" rx="1.5" fill="#565a6c"/><rect x="1877.5" y="767.1" width="10" height="3.6" rx="1.5" fill="#565a6c"/><rect x="1897.5" y="767.1" width="10" height="3.6" rx="1.5" fill="#565a6c"/><rect x="1877.5" y="773.4" width="10" height="3.6" rx="1.5" fill="#565a6c"/><rect x="1897.5" y="773.4" width="10" height="3.6" rx="1.5" fill="#565a6c"/><rect x="1877.5" y="779.7" width="10" height="3.6" rx="1.5" fill="#565a6c"/><rect x="1897.5" y="779.7" width="10" height="3.6" rx="1.5" fill="#565a6c"/><rect x="1877.5" y="786.0" width="10" height="3.6" rx="1.5" fill="#565a6c"/><rect x="1897.5" y="786.0" width="10" height="3.6" rx="1.5" fill="#565a6c"/><rect x="1877.5" y="792.3" width="10" height="3.6" rx="1.5" fill="#565a6c"/><rect x="1897.5" y="792.3" width="10" height="3.6" rx="1.5" fill="#565a6c"/><rect x="1877.5" y="798.6" width="10" height="3.6" rx="1.5" fill="#565a6c"/><rect x="1897.5" y="798.6" width="10" height="3.6" rx="1.5" fill="#565a6c"/><rect x="1877.5" y="804.9" width="10" height="3.6" rx="1.5" fill="#565a6c"/><rect x="1897.5" y="804.9" width="10" height="3.6" rx="1.5" fill="#565a6c"/><rect x="1877.5" y="811.2" width="10" height="3.6" rx="1.5" fill="#565a6c"/><rect x="1897.5" y="811.2" width="10" height="3.6" rx="1.5" fill="#565a6c"/><rect x="1877.5" y="817.5" width="10" height="3.6" rx="1.5" fill="#565a6c"/><rect x="1897.5" y="817.5" width="10" height="3.6" rx="1.5" fill="#565a6c"/><rect x="1877.5" y="823.8" width="10" height="3.6" rx="1.5" fill="#565a6c"/><rect x="1897.5" y="823.8" width="10" height="3.6" rx="1.5" fill="#565a6c"/><rect x="1877.5" y="830.1" width="10" height="3.6" rx="1.5" fill="#565a6c"/><rect x="1897.5" y="830.1" width="10" height="3.6" rx="1.5" fill="#565a6c"/><rect x="1877.5" y="836.4" width="10" height="3.6" rx="1.5" fill="#565a6c"/><rect x="1897.5" y="836.4" width="10" height="3.6" rx="1.5" fill="#565a6c"/><rect x="1877.5" y="842.7" width="10" height="3.6" rx="1.5" fill="#565a6c"/><rect x="1897.5" y="842.7" width="10" height="3.6" rx="1.5" fill="#565a6c"/><rect x="1877.5" y="849.0" width="10" height="3.6" rx="1.5" fill="#565a6c"/><rect x="1897.5" y="849.0" width="10" height="3.6" rx="1.5" fill="#565a6c"/><rect x="1877.5" y="855.3" width="10" height="3.6" rx="1.5" fill="#565a6c"/><rect x="1897.5" y="855.3" width="10" height="3.6" rx="1.5" fill="#565a6c"/><rect x="1877.5" y="861.6" width="10" height="3.6" rx="1.5" fill="#565a6c"/><rect x="1897.5" y="861.6" width="10" height="3.6" rx="1.5" fill="#565a6c"/><rect x="1877.5" y="867.9" width="10" height="3.6" rx="1.5" fill="#565a6c"/><rect x="1897.5" y="867.9" width="10" height="3.6" rx="1.5" fill="#565a6c"/><rect x="1877.5" y="874.2" width="10" height="3.6" rx="1.5" fill="#565a6c"/><rect x="1897.5" y="874.2" width="10" height="3.6" rx="1.5" fill="#565a6c"/><rect x="1877.5" y="880.5" width="10" height="3.6" rx="1.5" fill="#565a6c"/><rect x="1897.5" y="880.5" width="10" height="3.6" rx="1.5" fill="#565a6c"/><rect x="1877.5" y="886.8" width="10" height="3.6" rx="1.5" fill="#565a6c"/><rect x="1897.5" y="886.8" width="10" height="3.6" rx="1.5" fill="#565a6c"/><rect x="1877.5" y="893.1" width="10" height="3.6" rx="1.5" fill="#565a6c"/><rect x="1897.5" y="893.1" width="10" height="3.6" rx="1.5" fill="#565a6c"/><rect x="1877.5" y="899.4" width="10" height="3.6" rx="1.5" fill="#565a6c"/><rect x="1897.5" y="899.4" width="10" height="3.6" rx="1.5" fill="#565a6c"/><rect x="1877.5" y="905.7" width="10" height="3.6" rx="1.5" fill="#565a6c"/><rect x="1897.5" y="905.7" width="10" height="3.6" rx="1.5" fill="#565a6c"/><rect x="1877.5" y="912.0" width="10" height="3.6" rx="1.5" fill="#565a6c"/><rect x="1897.5" y="912.0" width="10" height="3.6" rx="1.5" fill="#565a6c"/><rect x="1877.5" y="918.3" width="10" height="3.6" rx="1.5" fill="#565a6c"/><rect x="1897.5" y="918.3" width="10" height="3.6" rx="1.5" fill="#565a6c"/><rect x="1877.5" y="924.6" width="10" height="3.6" rx="1.5" fill="#565a6c"/><rect x="1897.5" y="924.6" width="10" height="3.6" rx="1.5" fill="#565a6c"/><rect x="1877.5" y="930.9" width="10" height="3.6" rx="1.5" fill="#565a6c"/><rect x="1897.5" y="930.9" width="10" height="3.6" rx="1.5" fill="#565a6c"/><rect x="1877.5" y="937.2" width="10" height="3.6" rx="1.5" fill="#565a6c"/><rect x="1897.5" y="937.2" width="10" height="3.6" rx="1.5" fill="#565a6c"/><rect x="1877.5" y="943.5" width="10" height="3.6" rx="1.5" fill="#565a6c"/><rect x="1897.5" y="943.5" width="10" height="3.6" rx="1.5" fill="#565a6c"/><rect x="1877.5" y="949.8" width="10" height="3.6" rx="1.5" fill="#565a6c"/><rect x="1897.5" y="949.8" width="10" height="3.6" rx="1.5" fill="#565a6c"/><rect x="1877.5" y="956.1" width="10" height="3.6" rx="1.5" fill="#565a6c"/><rect x="1897.5" y="956.1" width="10" height="3.6" rx="1.5" fill="#565a6c"/><rect x="1877.5" y="962.4" width="10" height="3.6" rx="1.5" fill="#565a6c"/><rect x="1897.5" y="962.4" width="10" height="3.6" rx="1.5" fill="#565a6c"/><rect x="1877.5" y="968.7" width="10" height="3.6" rx="1.5" fill="#565a6c"/><rect x="1897.5" y="968.7" width="10" height="3.6" rx="1.5" fill="#565a6c"/><rect x="1877.5" y="975.0" width="10" height="3.6" rx="1.5" fill="#565a6c"/><rect x="1897.5" y="975.0" width="10" height="3.6" rx="1.5" fill="#565a6c"/><rect x="1877.5" y="981.3" width="10" height="3.6" rx="1.5" fill="#565a6c"/><rect x="1897.5" y="981.3" width="10" height="3.6" rx="1.5" fill="#565a6c"/><rect x="1877.5" y="987.6" width="10" height="3.6" rx="1.5" fill="#565a6c"/><rect x="1897.5" y="987.6" width="10" height="3.6" rx="1.5" fill="#565a6c"/><rect x="1877.5" y="993.9" width="10" height="3.6" rx="1.5" fill="#565a6c"/><rect x="1897.5" y="993.9" width="10" height="3.6" rx="1.5" fill="#565a6c"/><rect x="1877.5" y="1000.2" width="10" height="3.6" rx="1.5" fill="#565a6c"/><rect x="1897.5" y="1000.2" width="10" height="3.6" rx="1.5" fill="#565a6c"/><rect x="1877.5" y="1006.5" width="10" height="3.6" rx="1.5" fill="#565a6c"/><rect x="1897.5" y="1006.5" width="10" height="3.6" rx="1.5" fill="#565a6c"/><rect x="1877.5" y="1012.8" width="10" height="3.6" rx="1.5" fill="#565a6c"/><rect x="1897.5" y="1012.8" width="10" height="3.6" rx="1.5" fill="#565a6c"/><rect x="1877.5" y="1019.1" width="10" height="3.6" rx="1.5" fill="#565a6c"/><rect x="1897.5" y="1019.1" width="10" height="3.6" rx="1.5" fill="#565a6c"/><rect x="1877.5" y="1025.4" width="10" height="3.6" rx="1.5" fill="#565a6c"/><rect x="1897.5" y="1025.4" width="10" height="3.6" rx="1.5" fill="#565a6c"/><rect x="1867" y="622.1" width="5" height="1.3" fill="#6a6d7a"/><rect x="1867" y="678.1" width="5" height="1.3" fill="#6a6d7a"/><rect x="1867" y="734.7" width="5" height="1.3" fill="#6a6d7a"/><rect x="1867" y="790.4" width="5" height="1.3" fill="#6a6d7a"/><rect x="1867" y="847.4" width="5" height="1.3" fill="#6a6d7a"/><rect x="1867" y="911.4" width="5" height="1.3" fill="#6a6d7a"/><rect x="1867" y="974.4" width="5" height="1.3" fill="#6a6d7a"/></svg>
<div class="t" style="left:1798px;width:62px;text-align:right;top:616.7px;font-size:12.5px;color:#7a7c89">0</div>
<div class="t" style="left:1798px;width:62px;text-align:right;top:672.7px;font-size:12.5px;color:#7a7c89">-5</div>
<div class="t" style="left:1798px;width:62px;text-align:right;top:729.3px;font-size:12.5px;color:#7a7c89">-10</div>
<div class="t" style="left:1798px;width:62px;text-align:right;top:785.0px;font-size:12.5px;color:#7a7c89">-15</div>
<div class="t" style="left:1798px;width:62px;text-align:right;top:842.0px;font-size:12.5px;color:#7a7c89">-20</div>
<div class="t" style="left:1798px;width:62px;text-align:right;top:906.0px;font-size:12.5px;color:#7a7c89">-30</div>
<div class="t" style="left:1798px;width:62px;text-align:right;top:969.0px;font-size:12.5px;color:#7a7c89">-40</div>
<div class="t" style="left:1878px;top:1034px;font-size:11px;color:#7a7c89">L</div>
<div class="t" style="left:1898px;top:1034px;font-size:11px;color:#7a7c89">R</div>
<div class="a" style="left:1867.5px;top:1051px;width:1px;height:24px;background:#2a2c34"></div>
<svg class="ic" style="left:0;top:0" width="1920" height="1080"><g fill="#4e5160"><rect x="1884" y="1054.0" width="9.5" height="2"/><rect x="1895" y="1054.0" width="9.5" height="2"/><rect x="1884" y="1057.3" width="9.5" height="2"/><rect x="1895" y="1057.3" width="9.5" height="2"/><rect x="1884" y="1060.6" width="9.5" height="2"/><rect x="1895" y="1060.6" width="9.5" height="2"/><rect x="1884" y="1063.9" width="9.5" height="2"/><rect x="1895" y="1063.9" width="9.5" height="2"/><rect x="1884" y="1067.2" width="9.5" height="2"/><rect x="1895" y="1067.2" width="9.5" height="2"/><rect x="1884" y="1070.5" width="9.5" height="2"/><rect x="1895" y="1070.5" width="9.5" height="2"/></g></svg>
<div class="t" style="left:11px;top:1056px;font-size:16px;color:#c6c7d1;letter-spacing:0.15px;-webkit-text-stroke:0.4px #c6c7d1">Длительность проекта: 00:58</div>
</body></html>
